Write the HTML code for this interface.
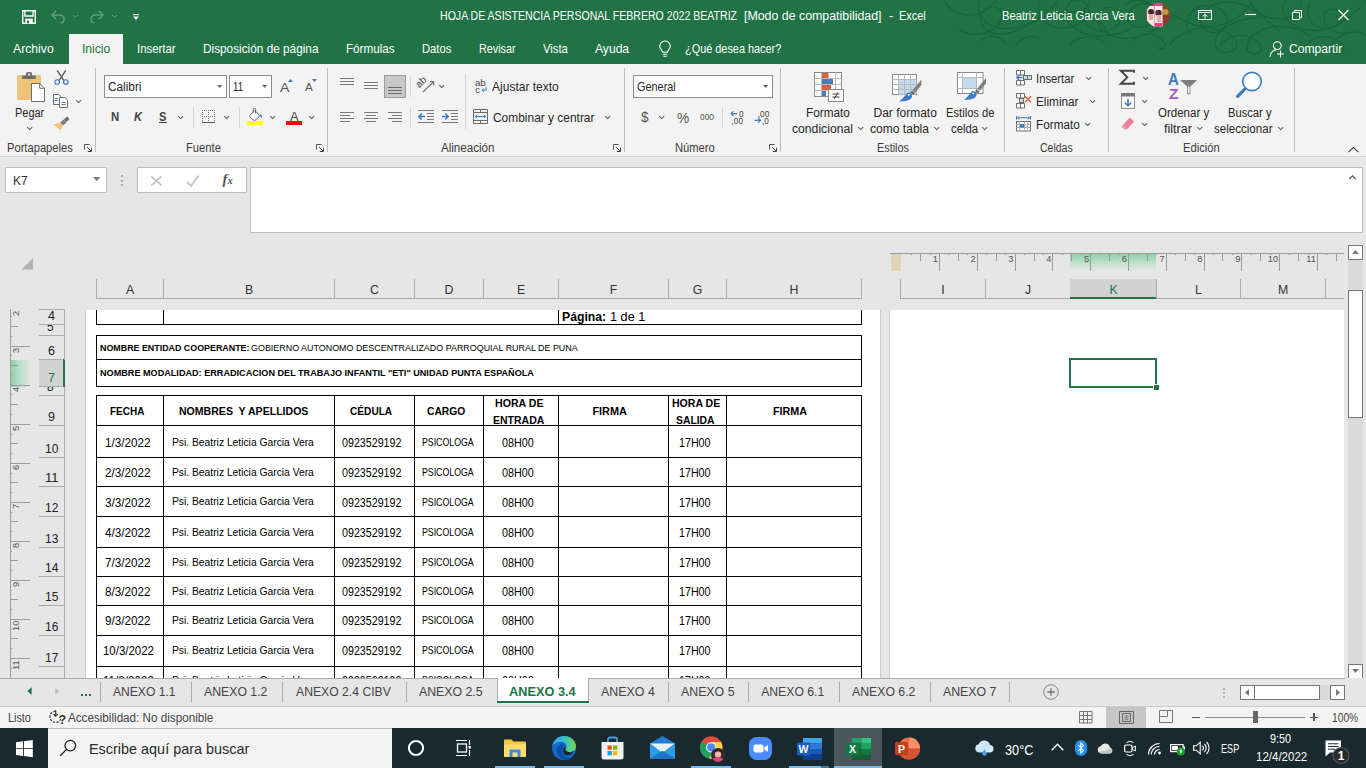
<!DOCTYPE html>
<html lang="es"><head><meta charset="utf-8"><title>HOJA DE ASISTENCIA PERSONAL FEBRERO 2022 BEATRIZ - Excel</title>
<style>
html,body{margin:0;padding:0;}
body{width:1366px;height:768px;overflow:hidden;position:relative;background:#e6e6e6;font-family:"Liberation Sans",sans-serif;}
#app{position:absolute;left:0;top:0;width:1366px;height:768px;overflow:hidden;}
#app div,#app svg,#app span.t{position:absolute;}
span.t{white-space:pre;transform-origin:0 50%;display:block;}
svg{overflow:visible;}
</style></head><body><div id="app">
<div style="left:0px;top:0px;width:1366px;height:64px;background:#217346;"></div>
<div style="left:0px;top:64px;width:1366px;height:92px;background:#f3f3f3;"></div>
<div style="left:0px;top:156px;width:1366px;height:1px;background:#d5d5d5;"></div>
<div style="left:0px;top:157px;width:1366px;height:521px;background:#e6e6e6;"></div>
<svg style="left:920px;top:0px;" width="446" height="48" viewBox="0 0 446 48">
<path stroke="#1a643a" stroke-width="1.3" fill="none" stroke-linecap="round" opacity="0.9" d="M25 2c8 14 30 18 44 6s8-22-4-14s-8 30 14 34s44-10 58-26"/>
<path stroke="#1a643a" stroke-width="1.3" fill="none" stroke-linecap="round" opacity="0.9" d="M120 0c-6 16 8 30 26 28s30-18 18-26s-26 8-14 22s40 16 62 4"/>
<path stroke="#1a643a" stroke-width="1.3" fill="none" stroke-linecap="round" opacity="0.9" d="M205 6c10-10 28-6 30 6s-14 20-24 12s2-22 18-20s30 18 50 22s40-6 52-22"/>
<path stroke="#1a643a" stroke-width="1.3" fill="none" stroke-linecap="round" opacity="0.9" d="M250 44c12-14 32-20 50-14s22 18 10 22s-22-10-8-22s40-16 64-10"/>
<path stroke="#1a643a" stroke-width="1.3" fill="none" stroke-linecap="round" opacity="0.9" d="M330 0c4 14 20 22 36 18s20-18 8-20s-16 16-2 26s36 8 50-2s22-18 24-22"/>
<path stroke="#1a643a" stroke-width="1.3" fill="none" stroke-linecap="round" opacity="0.9" d="M385 46c8-10 22-12 32-6s8 14 0 14s-8-12 4-18s22-4 25 0"/>
<path stroke="#1a643a" stroke-width="1.3" fill="none" stroke-linecap="round" opacity="0.9" d="M60 40c10-6 22-4 26 4M150 44c8-8 24-10 34-2"/>
<path stroke="#1a643a" stroke-width="1.3" fill="none" stroke-linecap="round" opacity="0.9" d="M40 30c14 8 34 4 40-8s-6-20-16-12s0 26 20 24s36-20 60-22s40 10 44 22"/>
<path stroke="#1a643a" stroke-width="1.3" fill="none" stroke-linecap="round" opacity="0.9" d="M170 2c-10 10-8 24 6 28s28-6 24-16s-20-8-22 4s14 22 34 20s30-14 44-26"/>
<path stroke="#1a643a" stroke-width="1.3" fill="none" stroke-linecap="round" opacity="0.9" d="M270 34c-8-12 0-26 14-28s26 8 22 18s-18 12-24 2s6-24 26-24s34 14 50 28"/>
<path stroke="#1a643a" stroke-width="1.3" fill="none" stroke-linecap="round" opacity="0.9" d="M300 46c6-10 20-14 32-8s12 16 2 16s-10-14 4-22s34-8 52 4"/>
<path stroke="#1a643a" stroke-width="1.3" fill="none" stroke-linecap="round" opacity="0.9" d="M390 4c-6 10 0 22 12 24s22-6 18-14s-16-6-16 4s12 18 26 14"/>
<path stroke="#1a643a" stroke-width="1.3" fill="none" stroke-linecap="round" opacity="0.9" d="M96 46c4-8 14-12 22-8M214 40c6-6 18-8 26-2s6 12-2 10"/>
</svg>
<svg style="left:22px;top:10px;" width="14" height="14" viewBox="0 0 14 14"><path d="M0.7 0.7h12.6v12.6h-12.6z" fill="none" stroke="#ffffff" stroke-width="1.4"/><path d="M2.900 0.700v5.300h8.200v-5.300" fill="none" stroke="#ffffff" stroke-width="1.300"/><rect x="3.2" y="8.6" width="7.6" height="4.7" fill="#ffffff"/><rect x="5" y="10.6" width="2" height="2.7" fill="#217346"/></svg>
<svg style="left:51px;top:10px;" width="14" height="13" viewBox="0 0 14 13"><path d="M5.2 0.8L1 5l4.2 4.2M1 5h7.2c3 0 5 2 5 4.3c0 2-1.6 3.4-3.6 3.4" fill="none" stroke="#5f9f7b" stroke-width="1.5"/></svg>
<svg style="left:73px;top:14.5px;" width="5" height="3" viewBox="0 0 5 3"><path d="M0 0l2.5 2.5L5 0" fill="none" stroke="#5f9f7b" stroke-width="1"/></svg>
<svg style="left:90px;top:10px;" width="14" height="13" viewBox="0 0 14 13"><path d="M8.8 0.8L13 5l-4.2 4.2M13 5H5.8c-3 0-5 2-5 4.3c0 2 1.6 3.4 3.6 3.4" fill="none" stroke="#5f9f7b" stroke-width="1.5"/></svg>
<svg style="left:112px;top:14.5px;" width="5" height="3" viewBox="0 0 5 3"><path d="M0 0l2.5 2.5L5 0" fill="none" stroke="#5f9f7b" stroke-width="1"/></svg>
<svg style="left:132.5px;top:14px;" width="6" height="6" viewBox="0 0 6 6"><rect x="0" y="0" width="6" height="1.2" fill="#ffffff"/><path d="M0 2.6h6l-3 3.4z" fill="#ffffff"/></svg>
<span class="t" style="font-size:12.5px;line-height:12.5px;top:9.92px;color:#ffffff;left:439.50px;transform:scaleX(0.8450);">HOJA DE ASISTENCIA PERSONAL FEBRERO 2022 BEATRIZ</span>
<span class="t" style="font-size:12.5px;line-height:12.5px;top:9.92px;color:#ffffff;left:743.50px;transform:scaleX(0.9893);">[Modo de compatibilidad]</span>
<span class="t" style="font-size:12.5px;line-height:12.5px;top:9.92px;color:#ffffff;left:888.60px;transform:scaleX(1.0067);">-</span>
<span class="t" style="font-size:12.5px;line-height:12.5px;top:9.92px;color:#ffffff;left:899.00px;transform:scaleX(0.8699);">Excel</span>
<span class="t" style="font-size:12.5px;line-height:12.5px;top:9.92px;color:#ffffff;left:1002.00px;transform:scaleX(0.8966);">Beatriz Leticia Garcia Vera</span>
<svg style="left:1146px;top:3px;" width="24" height="24" viewBox="0 0 24 24"><defs><clipPath id="av"><circle cx="12" cy="12" r="12"/></clipPath></defs>
<g clip-path="url(#av)"><rect width="24" height="24" fill="#c8346e"/><rect x="1" y="3" width="7" height="21" fill="#f3e9ea"/><rect x="8.5" y="2" width="8" height="22" fill="#f6eef0"/><rect x="17" y="0" width="7" height="24" fill="#7a4a22"/>
<circle cx="5" cy="9" r="3" fill="#3a2a2a"/><circle cx="12.5" cy="10" r="3.2" fill="#4a3030"/><rect x="3" y="11" width="4" height="6" fill="#d9a7a0"/><rect x="10.5" y="12" width="4.5" height="7" fill="#e0b1a8"/><circle cx="19.5" cy="9" r="3" fill="#c9973f"/><rect x="17" y="13" width="6" height="9" fill="#8c3a2a"/><rect x="8" y="0" width="9" height="3" fill="#e0457f"/><rect x="9" y="20" width="7" height="4" fill="#e0457f"/></g></svg>
<svg style="left:1198px;top:10px;" width="14" height="10" viewBox="0 0 14 10"><rect x="0.5" y="0.5" width="13" height="9" fill="none" stroke="#ffffff" stroke-width="1"/><path d="M0.500 2.500h13" stroke="#ffffff" stroke-width="1"/><path d="M7 8.500V4.400M4.800 6.400L7 4.200l2.200 2.200" fill="none" stroke="#ffffff" stroke-width="1"/></svg>
<div style="left:1245px;top:14px;width:11px;height:1px;background:#ffffff;"></div>
<svg style="left:1292px;top:10px;" width="10" height="10" viewBox="0 0 10 10"><path d="M0.5 2.5h7v7h-7z" fill="none" stroke="#ffffff" stroke-width="1"/><path d="M2.5 2.5v-2h7v7h-2" fill="none" stroke="#ffffff" stroke-width="1"/></svg>
<svg style="left:1338px;top:10px;" width="11" height="10" viewBox="0 0 11 10"><path d="M0.5 0L10.5 10M10.5 0L0.5 10" fill="none" stroke="#ffffff" stroke-width="1.1"/></svg>
<div style="left:69px;top:34px;width:54px;height:30px;background:#f3f3f3;"></div>
<span class="t" style="font-size:12.6px;line-height:12.6px;top:42.63px;color:#ffffff;left:13.10px;transform:scaleX(0.9690);">Archivo</span>
<span class="t" style="font-size:12.6px;line-height:12.6px;top:42.63px;color:#ffffff;left:137.40px;transform:scaleX(0.9039);">Insertar</span>
<span class="t" style="font-size:12.6px;line-height:12.6px;top:42.63px;color:#ffffff;left:203.30px;transform:scaleX(0.9372);">Disposición de página</span>
<span class="t" style="font-size:12.6px;line-height:12.6px;top:42.63px;color:#ffffff;left:346.20px;transform:scaleX(0.9260);">Fórmulas</span>
<span class="t" style="font-size:12.6px;line-height:12.6px;top:42.63px;color:#ffffff;left:422.40px;transform:scaleX(0.8904);">Datos</span>
<span class="t" style="font-size:12.6px;line-height:12.6px;top:42.63px;color:#ffffff;left:479.40px;transform:scaleX(0.8571);">Revisar</span>
<span class="t" style="font-size:12.6px;line-height:12.6px;top:42.63px;color:#ffffff;left:542.80px;transform:scaleX(0.8963);">Vista</span>
<span class="t" style="font-size:12.6px;line-height:12.6px;top:42.63px;color:#ffffff;left:594.60px;transform:scaleX(0.9610);">Ayuda</span>
<span class="t" style="font-size:12.6px;line-height:12.6px;top:42.63px;color:#ffffff;left:684.50px;transform:scaleX(0.8650);">¿Qué desea hacer?</span>
<span class="t" style="font-size:12.6px;line-height:12.6px;top:42.63px;color:#ffffff;left:1288.50px;transform:scaleX(0.9621);">Compartir</span>
<span class="t" style="font-size:12.6px;line-height:12.6px;top:42.63px;color:#217346;left:81.50px;transform:scaleX(0.9624);">Inicio</span>
<svg style="left:659px;top:41px;" width="12" height="16" viewBox="0 0 12 16"><path d="M3.6 11.2c0-1.6-2.9-2.9-2.9-5.9a5.3 5.3 0 0 1 10.6 0c0 3-2.9 4.3-2.9 5.9z" fill="none" stroke="#ffffff" stroke-width="1.1"/><path d="M3.8 13.2h4.4M4.4 15.2h3.2" stroke="#ffffff" stroke-width="1.1"/></svg>
<svg style="left:1268.5px;top:40.5px;" width="16" height="17" viewBox="0 0 16 17"><circle cx="8.3" cy="4.6" r="3.9" fill="none" stroke="#ffffff" stroke-width="1.1"/><path d="M0.8 16c0.6-4.2 3-6.8 6.6-7.3" fill="none" stroke="#ffffff" stroke-width="1.1"/><path d="M11.5 9.5v7M8 13h7" stroke="#ffffff" stroke-width="1.1"/></svg>
<div style="left:95px;top:68px;width:1px;height:84px;background:#bdbdbd;"></div>
<div style="left:327px;top:68px;width:1px;height:84px;background:#bdbdbd;"></div>
<div style="left:624px;top:68px;width:1px;height:84px;background:#bdbdbd;"></div>
<div style="left:780px;top:68px;width:1px;height:84px;background:#bdbdbd;"></div>
<div style="left:1004px;top:68px;width:1px;height:84px;background:#bdbdbd;"></div>
<div style="left:1108px;top:68px;width:1px;height:84px;background:#bdbdbd;"></div>
<div style="left:1294px;top:68px;width:1px;height:84px;background:#bdbdbd;"></div>
<svg style="left:16px;top:71px;" width="30" height="32" viewBox="0 0 30 32">
<rect x="1" y="4" width="24" height="25" rx="1.5" fill="#eec47c"/>
<path d="M6.300 8v-3.400h3.600v-1.600a2 2 0 0 1 2-2h2.200a2 2 0 0 1 2 2v1.600h3.600v3.400z" fill="#6d6d6d"/><circle cx="13" cy="3.600" r="1.100" fill="#f3f3f3"/>
<path d="M15.5 12.5h8.2l4.8 4.8v13.2h-13z" fill="#fff" stroke="#6d6d6d" stroke-width="1"/><path d="M23.7 12.5v4.8h4.8" fill="none" stroke="#6d6d6d" stroke-width="1"/></svg>
<span class="t" style="font-size:12px;line-height:12px;top:106.84px;color:#262626;left:14.80px;transform:scaleX(0.9116);">Pegar</span>
<svg style="left:26.6px;top:126.8px;" width="5.4" height="3" viewBox="0 0 5.4 3"><path d="M0.2 0.2l2.5 2.4l2.5-2.4" fill="none" stroke="#5a5a5a" stroke-width="1.05"/></svg>
<svg style="left:53.5px;top:70px;" width="15" height="15" viewBox="0 0 15 15"><path d="M3.2 0.3l6.6 10M11.8 0.3l-6.6 10" stroke="#5f5f5f" stroke-width="1.5" fill="none"/>
<circle cx="3.2" cy="12" r="2.3" fill="none" stroke="#3e7bc4" stroke-width="1.1"/><circle cx="11.8" cy="12" r="2.3" fill="none" stroke="#3e7bc4" stroke-width="1.1"/></svg>
<svg style="left:53px;top:94px;" width="16" height="14" viewBox="0 0 16 14"><path d="M0.5 0.5h5.3l2.7 2.7v7.3h-8z" fill="#fff" stroke="#6a6a6a"/><path d="M6.5 3.5h5.3l2.7 2.7v7.3h-8z" fill="#fff" stroke="#6a6a6a"/>
<path d="M2 4.5h3M2 6.5h3M8.5 8.5h4M8.5 10.5h4" stroke="#3e7bc4" stroke-width="1"/></svg>
<svg style="left:76.4px;top:100px;" width="5.4" height="3" viewBox="0 0 5.4 3"><path d="M0.2 0.2l2.5 2.4l2.5-2.4" fill="none" stroke="#5a5a5a" stroke-width="1.05"/></svg>
<svg style="left:53px;top:116px;" width="17" height="15" viewBox="0 0 17 15"><path d="M11 3.2l3.2-2.6l2.2 2.6l-3.2 2.8z" fill="#6d6d6d"/><path d="M7.2 6.4l3.6-3l2.6 3l-3.6 3z" fill="#7b7b7b"/><path d="M0.5 8.5l6.3-2l3.2 3.6l-2.6 4.4z" fill="#eec47c"/></svg>
<span class="t" style="font-size:12px;line-height:12px;top:142.34px;color:#3b3b3b;left:6.50px;transform:scaleX(0.9304);">Portapapeles</span>
<svg style="left:84px;top:144px;" width="8" height="8" viewBox="0 0 8 8"><path d="M0.5 5.5v-5h5" fill="none" stroke="#555" stroke-width="1"/><path d="M3 3l4 4M7.5 3.8v3.7h-3.7" fill="none" stroke="#444" stroke-width="1"/></svg>
<div style="left:104px;top:75px;width:121px;height:21px;background:#fff;border:1px solid #8c8c8c;"></div>
<span class="t" style="font-size:12px;line-height:12px;top:80.94px;color:#262626;left:107.50px;transform:scaleX(0.9848);">Calibri</span>
<svg style="left:216.8px;top:85.2px;" width="5.4" height="3" viewBox="0 0 5.4 3"><path d="M0 0h5.4l-2.7 3z" fill="#666"/></svg>
<div style="left:229px;top:75px;width:41px;height:21px;background:#fff;border:1px solid #8c8c8c;"></div>
<span class="t" style="font-size:12px;line-height:12px;top:80.94px;color:#262626;left:232.90px;transform:scaleX(0.8020);">11</span>
<svg style="left:261.8px;top:85.2px;" width="5.4" height="3" viewBox="0 0 5.4 3"><path d="M0 0h5.4l-2.7 3z" fill="#666"/></svg>
<span class="t" style="font-size:13px;line-height:13px;top:80.80px;color:#555;left:280.20px;transform:scaleX(1.0840);">A</span>
<svg style="left:288px;top:79px;" width="5" height="3" viewBox="0 0 5 3"><path d="M0 3h5l-2.5-3z" fill="#3e7bc4"/></svg>
<span class="t" style="font-size:10.2px;line-height:10.2px;top:83.17px;color:#555;left:305.00px;transform:scaleX(1.1476);">A</span>
<svg style="left:311.8px;top:79px;" width="5" height="3" viewBox="0 0 5 3"><path d="M0 0h5l-2.5 3z" fill="#3e7bc4"/></svg>
<span class="t" style="font-size:12px;line-height:12px;top:110.94px;color:#444;font-weight:bold;left:110.60px;transform:scaleX(0.9456);">N</span>
<span class="t" style="font-size:12px;line-height:12px;top:110.94px;color:#444;font-weight:bold;font-style:italic;left:134.00px;transform:scaleX(0.9225);">K</span>
<span class="t" style="font-size:12px;line-height:12px;top:110.94px;color:#444;font-weight:bold;left:159.30px;transform:scaleX(0.9232);">S</span>
<div style="left:159px;top:122px;width:8px;height:1px;background:#444;"></div>
<svg style="left:178.4px;top:115.8px;" width="5.4" height="3" viewBox="0 0 5.4 3"><path d="M0.2 0.2l2.5 2.4l2.5-2.4" fill="none" stroke="#5a5a5a" stroke-width="1.05"/></svg>
<div style="left:193px;top:107px;width:1px;height:21px;background:#d6d6d6;"></div>
<svg style="left:202px;top:110px;" width="13" height="13" viewBox="0 0 13 13"><g stroke="#7a7a7a" stroke-width="1" stroke-dasharray="1 1"><path d="M0 0.5h13M0 6.5h13M0.5 0v12M6.5 0v12M12.5 0v12"/></g><path d="M0 12.5h13" stroke="#555" stroke-width="1"/></svg>
<svg style="left:224.3px;top:115.8px;" width="5.4" height="3" viewBox="0 0 5.4 3"><path d="M0.2 0.2l2.5 2.4l2.5-2.4" fill="none" stroke="#5a5a5a" stroke-width="1.05"/></svg>
<div style="left:239px;top:107px;width:1px;height:21px;background:#d6d6d6;"></div>
<svg style="left:247px;top:108px;" width="17" height="17" viewBox="0 0 17 17"><path d="M2.2 8.2l5.6-5.6l5.2 5.2l-5.6 5.2z" fill="#fff" stroke="#666" stroke-width="1"/><path d="M6.2 4.6v-3.2q0-0.9 0.9-0.9h0.6q0.9 0 0.9 0.9v4" fill="none" stroke="#666" stroke-width="1"/>
<path d="M13.2 6.2c1.6 0.8 2.4 2.4 1.9 4.6c-0.6-1.5-1.6-2.5-2.9-3z" fill="#3e7bc4"/><rect x="0" y="13" width="16" height="4" fill="#ffff00"/></svg>
<svg style="left:270.2px;top:115.8px;" width="5.4" height="3" viewBox="0 0 5.4 3"><path d="M0.2 0.2l2.5 2.4l2.5-2.4" fill="none" stroke="#5a5a5a" stroke-width="1.05"/></svg>
<span class="t" style="font-size:13.6px;line-height:13.6px;top:109.59px;color:#444;left:289.80px;transform:scaleX(0.9473);">A</span>
<div style="left:286px;top:121px;width:16px;height:4px;background:#ff0000;"></div>
<svg style="left:309.3px;top:115.8px;" width="5.4" height="3" viewBox="0 0 5.4 3"><path d="M0.2 0.2l2.5 2.4l2.5-2.4" fill="none" stroke="#5a5a5a" stroke-width="1.05"/></svg>
<span class="t" style="font-size:12px;line-height:12px;top:142.34px;color:#3b3b3b;left:185.60px;transform:scaleX(0.9368);">Fuente</span>
<svg style="left:316px;top:144px;" width="8" height="8" viewBox="0 0 8 8"><path d="M0.5 5.5v-5h5" fill="none" stroke="#555" stroke-width="1"/><path d="M3 3l4 4M7.5 3.8v3.7h-3.7" fill="none" stroke="#444" stroke-width="1"/></svg>
<div style="left:340px;top:78px;width:14px;height:1px;background:#777;"></div>
<div style="left:340px;top:81px;width:14px;height:1px;background:#777;"></div>
<div style="left:340px;top:84px;width:14px;height:1px;background:#777;"></div>
<div style="left:364px;top:82px;width:14px;height:1px;background:#777;"></div>
<div style="left:364px;top:85px;width:14px;height:1px;background:#777;"></div>
<div style="left:364px;top:88px;width:14px;height:1px;background:#777;"></div>
<div style="left:384px;top:75px;width:20px;height:21px;background:#c8c8c8;border:1px solid #9a9a9a;"></div>
<div style="left:388px;top:87px;width:14px;height:1px;background:#6a6a6a;"></div>
<div style="left:388px;top:90px;width:14px;height:1px;background:#6a6a6a;"></div>
<div style="left:388px;top:93px;width:14px;height:1px;background:#6a6a6a;"></div>
<div style="left:410px;top:76px;width:1px;height:21px;background:#d6d6d6;"></div>
<svg style="left:418px;top:78px;" width="17" height="15" viewBox="0 0 17 15"><path d="M5 14.2L15.2 4.2M12 3.6l3.6 0.2l0.2 3.6" fill="none" stroke="#666" stroke-width="1.1"/>
<text x="0" y="0" font-size="10" fill="#444" transform="translate(1.2 10.2) rotate(-45)" font-family="Liberation Sans, sans-serif">ab</text></svg>
<svg style="left:439.3px;top:84.5px;" width="5.4" height="3" viewBox="0 0 5.4 3"><path d="M0.2 0.2l2.5 2.4l2.5-2.4" fill="none" stroke="#5a5a5a" stroke-width="1.05"/></svg>
<div style="left:465px;top:74px;width:1px;height:55px;background:#d6d6d6;"></div>
<div style="left:340px;top:112px;width:14px;height:1px;background:#777;"></div>
<div style="left:364px;top:112px;width:14px;height:1px;background:#777;"></div>
<div style="left:388px;top:112px;width:14px;height:1px;background:#777;"></div>
<div style="left:340px;top:115px;width:10px;height:1px;background:#777;"></div>
<div style="left:366px;top:115px;width:10px;height:1px;background:#777;"></div>
<div style="left:392px;top:115px;width:10px;height:1px;background:#777;"></div>
<div style="left:340px;top:118px;width:14px;height:1px;background:#777;"></div>
<div style="left:364px;top:118px;width:14px;height:1px;background:#777;"></div>
<div style="left:388px;top:118px;width:14px;height:1px;background:#777;"></div>
<div style="left:340px;top:121px;width:10px;height:1px;background:#777;"></div>
<div style="left:366px;top:121px;width:10px;height:1px;background:#777;"></div>
<div style="left:392px;top:121px;width:10px;height:1px;background:#777;"></div>
<div style="left:410px;top:107px;width:1px;height:21px;background:#d6d6d6;"></div>
<svg style="left:418px;top:110px;" width="16" height="13" viewBox="0 0 16 13"><path d="M0 0.5h16M9 3.5h7M9 6.5h7M9 9.5h7M0 12.5h16" stroke="#777" stroke-width="1"/><path d="M7 6.5H0.8M3.8 3.5L0.8 6.5l3 3" fill="none" stroke="#3e7bc4" stroke-width="1.5"/></svg>
<svg style="left:442px;top:110px;" width="16" height="13" viewBox="0 0 16 13"><path d="M0 0.5h16M9 3.5h7M9 6.5h7M9 9.5h7M0 12.5h16" stroke="#777" stroke-width="1"/><path d="M0 6.5h6.2M3.2 3.5l3 3l-3 3" fill="none" stroke="#3e7bc4" stroke-width="1.5"/></svg>
<svg style="left:474.5px;top:79px;" width="13" height="15" viewBox="0 0 13 15"><text x="0" y="6.8" font-size="9.6" fill="#444" font-family="Liberation Sans, sans-serif">ab</text><text x="0.3" y="13.6" font-size="9.6" fill="#444" font-family="Liberation Sans, sans-serif">c</text>
<path d="M11.2 8v3.2h-4M8.8 9.4l-1.8 1.8l1.8 1.8" fill="none" stroke="#3e7bc4" stroke-width="1"/></svg>
<span class="t" style="font-size:12px;line-height:12px;top:80.94px;color:#262626;left:492.10px;">Ajustar texto</span>
<svg style="left:473px;top:109px;" width="15" height="15" viewBox="0 0 15 15"><path d="M0.5 0.5h14v14h-14zM0.5 3.5h14M0.5 11.5h14M7.5 0.5v3M7.5 11.5v3" fill="none" stroke="#6d6d6d" stroke-width="1"/>
<path d="M2.2 7.5h10.6M4.2 5.7l-2 1.8l2 1.8M10.8 5.7l2 1.8l-2 1.8" fill="none" stroke="#3e7bc4" stroke-width="1"/></svg>
<span class="t" style="font-size:12px;line-height:12px;top:112.14px;color:#262626;left:492.50px;transform:scaleX(0.9946);">Combinar y centrar</span>
<svg style="left:605.3px;top:115.8px;" width="5.4" height="3" viewBox="0 0 5.4 3"><path d="M0.2 0.2l2.5 2.4l2.5-2.4" fill="none" stroke="#5a5a5a" stroke-width="1.05"/></svg>
<span class="t" style="font-size:12px;line-height:12px;top:142.34px;color:#3b3b3b;left:441.00px;transform:scaleX(0.9643);">Alineación</span>
<svg style="left:613px;top:144px;" width="8" height="8" viewBox="0 0 8 8"><path d="M0.5 5.5v-5h5" fill="none" stroke="#555" stroke-width="1"/><path d="M3 3l4 4M7.5 3.8v3.7h-3.7" fill="none" stroke="#444" stroke-width="1"/></svg>
<div style="left:633px;top:75px;width:138px;height:21px;background:#fff;border:1px solid #8c8c8c;"></div>
<span class="t" style="font-size:12px;line-height:12px;top:80.94px;color:#262626;left:636.60px;transform:scaleX(0.9086);">General</span>
<svg style="left:762.5px;top:85.2px;" width="5.4" height="3" viewBox="0 0 5.4 3"><path d="M0 0h5.4l-2.7 3z" fill="#666"/></svg>
<span class="t" style="font-size:15px;line-height:15px;top:109.20px;color:#555;left:640.60px;transform:scaleX(0.9109);">$</span>
<svg style="left:659px;top:115.8px;" width="5.4" height="3" viewBox="0 0 5.4 3"><path d="M0.2 0.2l2.5 2.4l2.5-2.4" fill="none" stroke="#5a5a5a" stroke-width="1.05"/></svg>
<span class="t" style="font-size:14px;line-height:14px;top:111.05px;color:#555;left:677.20px;transform:scaleX(0.9797);">%</span>
<span class="t" style="font-size:9px;line-height:9px;top:112.68px;color:#555;left:700.00px;transform:scaleX(0.9314);">000</span>
<div style="left:722px;top:107px;width:1px;height:21px;background:#d6d6d6;"></div>
<svg style="left:730px;top:110px;" width="15" height="14" viewBox="0 0 15 14"><path d="M7 3.6H1M3.4 1.2L1 3.6l2.4 2.4" fill="none" stroke="#3e7bc4" stroke-width="1.1"/>
<text x="9" y="6.6" font-size="8.2" font-family="Liberation Sans, sans-serif" fill="#444">0</text><text x="1.6" y="13.6" font-size="8.2" font-family="Liberation Sans, sans-serif" fill="#444">,00</text></svg>
<svg style="left:753.5px;top:110px;" width="15" height="14" viewBox="0 0 15 14"><text x="3.8" y="6.6" font-size="8.2" font-family="Liberation Sans, sans-serif" fill="#444">,00</text><path d="M0.5 10.4h6M4.1 8L6.5 10.4l-2.4 2.4" fill="none" stroke="#3e7bc4" stroke-width="1.1"/>
<text x="8" y="13.6" font-size="8.2" font-family="Liberation Sans, sans-serif" fill="#444">,0</text></svg>
<span class="t" style="font-size:12px;line-height:12px;top:142.34px;color:#3b3b3b;left:674.60px;transform:scaleX(0.9324);">Número</span>
<svg style="left:769px;top:144px;" width="8" height="8" viewBox="0 0 8 8"><path d="M0.5 5.5v-5h5" fill="none" stroke="#555" stroke-width="1"/><path d="M3 3l4 4M7.5 3.8v3.7h-3.7" fill="none" stroke="#444" stroke-width="1"/></svg>
<svg style="left:814px;top:72px;" width="31" height="30" viewBox="0 0 31 30"><rect x="0.5" y="0.5" width="27" height="24" fill="#fff" stroke="#8a8a8a"/>
<path d="M0.5 6.5h27M0.5 12.5h27M0.5 18.5h27M7.5 0.5v24M14.5 0.5v24M21.5 0.5v24" stroke="#b9b9b9" stroke-width="1"/>
<rect x="8" y="1" width="6" height="5" fill="#d9603b"/><rect x="8" y="7" width="11" height="5" fill="#4a7ebb"/><rect x="8" y="13" width="9" height="5" fill="#d9603b"/><rect x="8" y="19" width="4" height="5" fill="#4a7ebb"/>
<rect x="14.5" y="17.5" width="15" height="12" fill="#fff" stroke="#8a8a8a"/><path d="M18.5 22h7M18.5 25h7M24 20.2l-4 6.8" stroke="#444" stroke-width="1" fill="none"/></svg>
<span class="t" style="font-size:12px;line-height:12px;top:106.84px;color:#262626;left:805.60px;transform:scaleX(0.9801);">Formato</span>
<span class="t" style="font-size:12px;line-height:12px;top:122.84px;color:#262626;left:791.60px;transform:scaleX(1.0142);">condicional</span>
<svg style="left:857.6px;top:126.8px;" width="5.4" height="3" viewBox="0 0 5.4 3"><path d="M0.2 0.2l2.5 2.4l2.5-2.4" fill="none" stroke="#5a5a5a" stroke-width="1.05"/></svg>
<svg style="left:892px;top:74px;" width="30" height="28" viewBox="0 0 30 28"><rect x="0.5" y="0.5" width="24" height="20" fill="#fff" stroke="#8a8a8a"/>
<rect x="6.5" y="5.5" width="18" height="15" fill="#c5d9ef"/>
<path d="M0.5 5.5h24M0.5 10.5h24M0.5 15.5h24M6.5 0.5v20M12.5 0.5v20M18.5 0.5v20" stroke="#b9b9b9" stroke-width="1"/>
<path d="M29.4 5.6v5.4l-6.2 7.4l-2.6-2.2z" fill="#7f7f7f"/><path d="M20 16.6l2.8 2.4l-1.4 2l-2.8-2.4z" fill="#6a6a6a"/>
<path d="M7 27.4c3.5-2 5.4-5 7.4-7.6c1.6-2 4.6-1.4 5.4 0.6c0.9 2.4-0.5 4.6-3 5.6c-3 1.2-6.2 1.4-9.800 1.4z" fill="#3e7bc4"/><path d="M15.4 20.6c0.8-0.8 2.200-0.600 2.800 0.200l-1.6 1.400z" fill="#fff"/></svg>
<span class="t" style="font-size:12px;line-height:12px;top:106.84px;color:#262626;left:873.50px;">Dar formato</span>
<span class="t" style="font-size:12px;line-height:12px;top:122.84px;color:#262626;left:869.80px;transform:scaleX(1.0051);">como tabla</span>
<svg style="left:933.6px;top:126.8px;" width="5.4" height="3" viewBox="0 0 5.4 3"><path d="M0.2 0.2l2.5 2.4l2.5-2.4" fill="none" stroke="#5a5a5a" stroke-width="1.05"/></svg>
<svg style="left:957px;top:72px;" width="30" height="29" viewBox="0 0 30 29"><rect x="0.5" y="0.5" width="25.500" height="21" fill="#fff" stroke="#8a8a8a"/>
<path d="M0.5 5.5h25.500M0.5 16.5h25.500M5.5 0.500v21M19.500 0.500v21" stroke="#b9b9b9" stroke-width="1"/><rect x="6" y="6" width="13" height="10" fill="#c5d9ef"/>
<path d="M29 6v5.400l-6.200 7.400l-2.600-2.200z" fill="#7f7f7f"/><path d="M19.600 17l2.800 2.400l-1.400 2l-2.800-2.400z" fill="#6a6a6a"/>
<path d="M6.600 27.800c3.500-2 5.400-5 7.400-7.600c1.600-2 4.600-1.400 5.400 0.600c0.900 2.400-0.500 4.600-3 5.600c-3 1.200-6.200 1.400-9.800 1.400z" fill="#3e7bc4"/><path d="M15 21c0.800-0.800 2.200-0.600 2.800 0.200l-1.600 1.400z" fill="#fff"/></svg>
<span class="t" style="font-size:12px;line-height:12px;top:106.84px;color:#262626;left:945.60px;transform:scaleX(0.9321);">Estilos de</span>
<span class="t" style="font-size:12px;line-height:12px;top:122.84px;color:#262626;left:950.60px;transform:scaleX(0.9481);">celda</span>
<svg style="left:982.4px;top:126.8px;" width="5.4" height="3" viewBox="0 0 5.4 3"><path d="M0.2 0.2l2.5 2.4l2.5-2.4" fill="none" stroke="#5a5a5a" stroke-width="1.05"/></svg>
<span class="t" style="font-size:12px;line-height:12px;top:142.34px;color:#3b3b3b;left:876.60px;transform:scaleX(0.9026);">Estilos</span>
<svg style="left:1016px;top:70px;" width="16" height="16" viewBox="0 0 16 16"><path d="M0.500 0.500h8v4.500h-8zM4.500 0.500v4.500M0.500 10.500h8v4.500h-8zM4.500 10.500v4.500" fill="#fff" stroke="#6d6d6d"/>
<rect x="7.500" y="5.500" width="8" height="4" fill="#c5d9ef" stroke="#6d6d6d"/><path d="M11.500 5.500v4" stroke="#6d6d6d"/><path d="M6.500 7.500H0.800M3.200 5L0.800 7.500l2.400 2.500" fill="none" stroke="#3e7bc4" stroke-width="1.300"/></svg>
<span class="t" style="font-size:12px;line-height:12px;top:73.14px;color:#262626;left:1035.60px;transform:scaleX(0.9389);">Insertar</span>
<svg style="left:1085.5px;top:76.8px;" width="5.4" height="3" viewBox="0 0 5.4 3"><path d="M0.2 0.2l2.5 2.4l2.5-2.4" fill="none" stroke="#5a5a5a" stroke-width="1.05"/></svg>
<svg style="left:1016px;top:93px;" width="16" height="16" viewBox="0 0 16 16"><path d="M0.500 0.500h8v4.500h-8zM4.500 0.500v4.500M0.500 10.500h8v4.500h-8zM4.500 10.500v4.500" fill="#fff" stroke="#6d6d6d"/>
<rect x="3.500" y="5.500" width="4" height="4" fill="#c5d9ef" stroke="#6d6d6d"/><path d="M9 3.200l6 6M15 3.200l-6 6" fill="none" stroke="#d9603b" stroke-width="1.300"/></svg>
<span class="t" style="font-size:12px;line-height:12px;top:96.04px;color:#262626;left:1035.60px;transform:scaleX(0.9805);">Eliminar</span>
<svg style="left:1089.5px;top:100px;" width="5.4" height="3" viewBox="0 0 5.4 3"><path d="M0.2 0.2l2.5 2.4l2.5-2.4" fill="none" stroke="#5a5a5a" stroke-width="1.05"/></svg>
<svg style="left:1016px;top:116px;" width="15" height="16" viewBox="0 0 15 16"><path d="M0.500 0v3.500M14.500 0v3.500M1.500 1.800h12M3.300 0.300L1.500 1.800l1.800 1.500M11.700 0.300l1.800 1.500l-1.800 1.500" fill="none" stroke="#3e7bc4" stroke-width="1"/>
<rect x="0.500" y="5.500" width="14" height="9.500" fill="#fff" stroke="#6d6d6d"/><path d="M0.500 8.500h14M0.500 11.500h14M3.500 5.500v9.500M8.500 5.500v9.500M11.500 5.500v9.500" stroke="#b0b0b0"/><rect x="4" y="8" width="4" height="3.500" fill="#3e7bc4"/></svg>
<span class="t" style="font-size:12px;line-height:12px;top:119.14px;color:#262626;left:1035.60px;transform:scaleX(0.9801);">Formato</span>
<svg style="left:1084.6px;top:123px;" width="5.4" height="3" viewBox="0 0 5.4 3"><path d="M0.2 0.2l2.5 2.4l2.5-2.4" fill="none" stroke="#5a5a5a" stroke-width="1.05"/></svg>
<span class="t" style="font-size:12px;line-height:12px;top:142.34px;color:#3b3b3b;left:1039.80px;transform:scaleX(0.8753);">Celdas</span>
<svg style="left:1120px;top:70px;" width="15" height="15" viewBox="0 0 15 15"><path d="M14 2.800V0.800H0.800l6.600 6.500L0.800 13.800H14v-2" fill="none" stroke="#444" stroke-width="1.900"/></svg>
<svg style="left:1143.4px;top:76.8px;" width="5.4" height="3" viewBox="0 0 5.4 3"><path d="M0.2 0.2l2.5 2.4l2.5-2.4" fill="none" stroke="#5a5a5a" stroke-width="1.05"/></svg>
<svg style="left:1121px;top:93px;" width="14" height="16" viewBox="0 0 14 16"><rect x="0.500" y="0.500" width="13" height="15" fill="#fff" stroke="#8a8a8a"/><rect x="0" y="0" width="14" height="3.500" fill="#7a7a7a"/><path d="M7 5.500v7M3.800 9.500L7 12.700l3.200-3.200" fill="none" stroke="#3e7bc4" stroke-width="1.600"/></svg>
<svg style="left:1141.5px;top:100px;" width="5.4" height="3" viewBox="0 0 5.4 3"><path d="M0.2 0.2l2.5 2.4l2.5-2.4" fill="none" stroke="#5a5a5a" stroke-width="1.05"/></svg>
<svg style="left:1121px;top:117px;" width="14" height="13" viewBox="0 0 14 13"><path d="M8.800 0.600l4.400 4l-7 7.600l-4.400-4z" fill="#e8829a"/><path d="M1.200 8.800l4.400 4" stroke="#f3f3f3" stroke-width="1"/><path d="M0.600 9.500l3.800 3.400l1-1l-3.800-3.500z" fill="#e8829a"/></svg>
<svg style="left:1141.5px;top:123px;" width="5.4" height="3" viewBox="0 0 5.4 3"><path d="M0.2 0.2l2.5 2.4l2.5-2.4" fill="none" stroke="#5a5a5a" stroke-width="1.05"/></svg>
<span class="t" style="font-size:15.6px;line-height:15.6px;top:71.99px;color:#3e7bc4;font-weight:bold;left:1168.10px;transform:scaleX(0.9675);">A</span>
<span class="t" style="font-size:15.4px;line-height:15.4px;top:86.26px;color:#a05cc4;font-weight:bold;left:1169.00px;transform:scaleX(1.0100);">Z</span>
<svg style="left:1180px;top:80px;" width="18" height="15" viewBox="0 0 18 15"><path d="M0 0h17.200l-6.800 6.600v7.600h-3.400v-7.600z" fill="#7f7f7f"/><rect x="7.800" y="6.500" width="1.800" height="6.700" fill="#f3f3f3"/></svg>
<span class="t" style="font-size:12px;line-height:12px;top:106.84px;color:#262626;left:1157.50px;transform:scaleX(0.9595);">Ordenar y</span>
<span class="t" style="font-size:12px;line-height:12px;top:122.84px;color:#262626;left:1164.00px;transform:scaleX(1.0460);">filtrar</span>
<svg style="left:1196.8px;top:126.8px;" width="5.4" height="3" viewBox="0 0 5.4 3"><path d="M0.2 0.2l2.5 2.4l2.5-2.4" fill="none" stroke="#5a5a5a" stroke-width="1.05"/></svg>
<svg style="left:1236px;top:71px;" width="27" height="27" viewBox="0 0 27 27"><path d="M8.600 18.400l-7 7" stroke="#3e7bc4" stroke-width="3.200" stroke-linecap="round"/><circle cx="16" cy="10.500" r="9.200" fill="#fff" stroke="#3e7bc4" stroke-width="1.700"/></svg>
<span class="t" style="font-size:12px;line-height:12px;top:106.84px;color:#262626;left:1227.50px;transform:scaleX(0.9317);">Buscar y</span>
<span class="t" style="font-size:12px;line-height:12px;top:122.84px;color:#262626;left:1214.40px;transform:scaleX(0.9637);">seleccionar</span>
<svg style="left:1277.8px;top:126.8px;" width="5.4" height="3" viewBox="0 0 5.4 3"><path d="M0.2 0.2l2.5 2.4l2.5-2.4" fill="none" stroke="#5a5a5a" stroke-width="1.05"/></svg>
<span class="t" style="font-size:12px;line-height:12px;top:142.34px;color:#3b3b3b;left:1182.80px;transform:scaleX(0.9299);">Edición</span>
<svg style="left:1347.5px;top:147px;" width="11" height="6" viewBox="0 0 11 6"><path d="M0.400 5.200l5-4.600l5 4.600" fill="none" stroke="#444" stroke-width="1.100"/></svg>
<div style="left:5px;top:167px;width:100px;height:24px;background:#fff;border:1px solid #bdbdbd;"></div>
<span class="t" style="font-size:12.4px;line-height:12.4px;top:174.80px;color:#333;left:12.50px;transform:scaleX(0.9765);">K7</span>
<svg style="left:92.8px;top:177px;" width="7.4" height="4" viewBox="0 0 7.4 4"><path d="M0 0h7.400l-3.700 4z" fill="#777"/></svg>
<div style="left:121px;top:175px;width:2px;height:2px;background:#a9a9a9;"></div>
<div style="left:121px;top:179.5px;width:2px;height:2px;background:#a9a9a9;"></div>
<div style="left:121px;top:184px;width:2px;height:2px;background:#a9a9a9;"></div>
<div style="left:137px;top:167px;width:108px;height:24px;background:#fff;border:1px solid #bdbdbd;"></div>
<svg style="left:150.5px;top:175.5px;" width="11" height="9.5" viewBox="0 0 11 9.5"><path d="M0.300 0.300l10.400 9M10.700 0.300L0.300 9.300" stroke="#c3c3c3" stroke-width="1.700" fill="none"/></svg>
<svg style="left:186px;top:174.5px;" width="13" height="11.5" viewBox="0 0 13 11.5"><path d="M0.600 6.600l4.400 4.200L12.600 0.600" stroke="#c9c9c9" stroke-width="1.900" fill="none"/></svg>
<span class="t" style="font-size:14.5px;line-height:14.5px;top:172.23px;color:#555;font-weight:bold;font-style:italic;font-family:&quot;Liberation Serif&quot;,serif;left:222.60px;">f</span>
<span class="t" style="font-size:10.5px;line-height:10.5px;top:175.81px;color:#555;font-weight:bold;font-style:italic;font-family:&quot;Liberation Serif&quot;,serif;left:227.40px;">x</span>
<div style="left:250px;top:167px;width:1111px;height:64px;background:#fff;border:1px solid #bdbdbd;"></div>
<svg style="left:1349px;top:175px;" width="7" height="4.5" viewBox="0 0 7 4.5"><path d="M0.400 4l3.100-3.200l3.100 3.200" fill="none" stroke="#555" stroke-width="1.200"/></svg>
<svg style="left:21px;top:258px;" width="12" height="12" viewBox="0 0 12 12"><path d="M12 0v11.500H0.500z" fill="#b2b2b2"/></svg>
<div style="left:1070px;top:254px;width:86px;height:17px;background:linear-gradient(#8fd0ab,#b9dfc9 45%,#e6e6e6);"></div>
<div style="left:891px;top:254px;width:10px;height:17px;background:#e3d3b8;"></div>
<div style="left:890px;top:253px;width:454px;height:1px;background:#9c9c9c;"></div>
<div style="left:911px;top:253px;width:1px;height:2px;background:#9c9c9c;"></div>
<div style="left:920px;top:253px;width:1px;height:8px;background:#9c9c9c;"></div>
<div style="left:930px;top:253px;width:1px;height:2px;background:#9c9c9c;"></div>
<div style="left:939px;top:253px;width:1px;height:18px;background:#9c9c9c;"></div>
<span class="t" style="font-size:9.3px;line-height:9.3px;top:255.43px;color:#555;left:932.73px;">1</span>
<div style="left:948px;top:253px;width:1px;height:2px;background:#9c9c9c;"></div>
<div style="left:958px;top:253px;width:1px;height:8px;background:#9c9c9c;"></div>
<div style="left:967px;top:253px;width:1px;height:2px;background:#9c9c9c;"></div>
<div style="left:977px;top:253px;width:1px;height:18px;background:#9c9c9c;"></div>
<span class="t" style="font-size:9.3px;line-height:9.3px;top:255.43px;color:#555;left:970.53px;">2</span>
<div style="left:986px;top:253px;width:1px;height:2px;background:#9c9c9c;"></div>
<div style="left:996px;top:253px;width:1px;height:8px;background:#9c9c9c;"></div>
<div style="left:1005px;top:253px;width:1px;height:2px;background:#9c9c9c;"></div>
<div style="left:1015px;top:253px;width:1px;height:18px;background:#9c9c9c;"></div>
<span class="t" style="font-size:9.3px;line-height:9.3px;top:255.43px;color:#555;left:1008.33px;">3</span>
<div style="left:1024px;top:253px;width:1px;height:2px;background:#9c9c9c;"></div>
<div style="left:1034px;top:253px;width:1px;height:8px;background:#9c9c9c;"></div>
<div style="left:1043px;top:253px;width:1px;height:2px;background:#9c9c9c;"></div>
<div style="left:1052px;top:253px;width:1px;height:18px;background:#9c9c9c;"></div>
<span class="t" style="font-size:9.3px;line-height:9.3px;top:255.43px;color:#555;left:1046.13px;">4</span>
<div style="left:1062px;top:253px;width:1px;height:2px;background:#9c9c9c;"></div>
<div style="left:1071px;top:253px;width:1px;height:8px;background:#9c9c9c;"></div>
<div style="left:1081px;top:253px;width:1px;height:2px;background:#9c9c9c;"></div>
<div style="left:1090px;top:253px;width:1px;height:18px;background:#9c9c9c;"></div>
<span class="t" style="font-size:9.3px;line-height:9.3px;top:255.43px;color:#555;left:1083.93px;">5</span>
<div style="left:1100px;top:253px;width:1px;height:2px;background:#9c9c9c;"></div>
<div style="left:1109px;top:253px;width:1px;height:8px;background:#9c9c9c;"></div>
<div style="left:1119px;top:253px;width:1px;height:2px;background:#9c9c9c;"></div>
<div style="left:1128px;top:253px;width:1px;height:18px;background:#9c9c9c;"></div>
<span class="t" style="font-size:9.3px;line-height:9.3px;top:255.43px;color:#555;left:1121.73px;">6</span>
<div style="left:1137px;top:253px;width:1px;height:2px;background:#9c9c9c;"></div>
<div style="left:1147px;top:253px;width:1px;height:8px;background:#9c9c9c;"></div>
<div style="left:1156px;top:253px;width:1px;height:2px;background:#9c9c9c;"></div>
<div style="left:1166px;top:253px;width:1px;height:18px;background:#9c9c9c;"></div>
<span class="t" style="font-size:9.3px;line-height:9.3px;top:255.43px;color:#555;left:1159.53px;">7</span>
<div style="left:1175px;top:253px;width:1px;height:2px;background:#9c9c9c;"></div>
<div style="left:1185px;top:253px;width:1px;height:8px;background:#9c9c9c;"></div>
<div style="left:1194px;top:253px;width:1px;height:2px;background:#9c9c9c;"></div>
<div style="left:1204px;top:253px;width:1px;height:18px;background:#9c9c9c;"></div>
<span class="t" style="font-size:9.3px;line-height:9.3px;top:255.43px;color:#555;left:1197.33px;">8</span>
<div style="left:1213px;top:253px;width:1px;height:2px;background:#9c9c9c;"></div>
<div style="left:1222px;top:253px;width:1px;height:8px;background:#9c9c9c;"></div>
<div style="left:1232px;top:253px;width:1px;height:2px;background:#9c9c9c;"></div>
<div style="left:1241px;top:253px;width:1px;height:18px;background:#9c9c9c;"></div>
<span class="t" style="font-size:9.3px;line-height:9.3px;top:255.43px;color:#555;left:1235.13px;">9</span>
<div style="left:1251px;top:253px;width:1px;height:2px;background:#9c9c9c;"></div>
<div style="left:1260px;top:253px;width:1px;height:8px;background:#9c9c9c;"></div>
<div style="left:1270px;top:253px;width:1px;height:2px;background:#9c9c9c;"></div>
<div style="left:1279px;top:253px;width:1px;height:18px;background:#9c9c9c;"></div>
<span class="t" style="font-size:9.3px;line-height:9.3px;top:255.43px;color:#555;left:1267.76px;">10</span>
<div style="left:1289px;top:253px;width:1px;height:2px;background:#9c9c9c;"></div>
<div style="left:1298px;top:253px;width:1px;height:8px;background:#9c9c9c;"></div>
<div style="left:1308px;top:253px;width:1px;height:2px;background:#9c9c9c;"></div>
<div style="left:1317px;top:253px;width:1px;height:18px;background:#9c9c9c;"></div>
<span class="t" style="font-size:9.3px;line-height:9.3px;top:255.43px;color:#555;left:1306.24px;">11</span>
<div style="left:1326px;top:253px;width:1px;height:2px;background:#9c9c9c;"></div>
<div style="left:1336px;top:253px;width:1px;height:8px;background:#9c9c9c;"></div>
<div style="left:96px;top:298px;width:766px;height:1px;background:#ababab;"></div>
<div style="left:900px;top:298px;width:444px;height:1px;background:#ababab;"></div>
<div style="left:96px;top:279px;width:1px;height:20px;background:#ababab;"></div>
<div style="left:163px;top:279px;width:1px;height:20px;background:#ababab;"></div>
<div style="left:334px;top:279px;width:1px;height:20px;background:#ababab;"></div>
<div style="left:414px;top:279px;width:1px;height:20px;background:#ababab;"></div>
<div style="left:483px;top:279px;width:1px;height:20px;background:#ababab;"></div>
<div style="left:558px;top:279px;width:1px;height:20px;background:#ababab;"></div>
<div style="left:668px;top:279px;width:1px;height:20px;background:#ababab;"></div>
<div style="left:726px;top:279px;width:1px;height:20px;background:#ababab;"></div>
<div style="left:861px;top:279px;width:1px;height:20px;background:#ababab;"></div>
<div style="left:900px;top:279px;width:1px;height:20px;background:#ababab;"></div>
<div style="left:985px;top:279px;width:1px;height:20px;background:#ababab;"></div>
<div style="left:1070px;top:279px;width:1px;height:20px;background:#ababab;"></div>
<div style="left:1156px;top:279px;width:1px;height:20px;background:#ababab;"></div>
<div style="left:1240px;top:279px;width:1px;height:20px;background:#ababab;"></div>
<div style="left:1325px;top:279px;width:1px;height:20px;background:#ababab;"></div>
<div style="left:1070px;top:279px;width:86px;height:18px;background:#d2d2d2;"></div>
<div style="left:1070px;top:297px;width:86px;height:2px;background:#217346;"></div>
<span class="t" style="font-size:12.3px;line-height:12.3px;top:283.89px;color:#333;left:125.90px;">A</span>
<span class="t" style="font-size:12.3px;line-height:12.3px;top:283.89px;color:#333;left:244.90px;">B</span>
<span class="t" style="font-size:12.3px;line-height:12.3px;top:283.89px;color:#333;left:370.05px;">C</span>
<span class="t" style="font-size:12.3px;line-height:12.3px;top:283.89px;color:#333;left:444.55px;">D</span>
<span class="t" style="font-size:12.3px;line-height:12.3px;top:283.89px;color:#333;left:516.90px;">E</span>
<span class="t" style="font-size:12.3px;line-height:12.3px;top:283.89px;color:#333;left:609.74px;">F</span>
<span class="t" style="font-size:12.3px;line-height:12.3px;top:283.89px;color:#333;left:692.71px;">G</span>
<span class="t" style="font-size:12.3px;line-height:12.3px;top:283.89px;color:#333;left:789.55px;">H</span>
<span class="t" style="font-size:12.3px;line-height:12.3px;top:283.89px;color:#333;left:941.29px;">I</span>
<span class="t" style="font-size:12.3px;line-height:12.3px;top:283.89px;color:#333;left:1024.92px;">J</span>
<span class="t" style="font-size:12.3px;line-height:12.3px;top:283.89px;color:#217346;left:1109.40px;">K</span>
<span class="t" style="font-size:12.3px;line-height:12.3px;top:283.89px;color:#333;left:1195.08px;">L</span>
<span class="t" style="font-size:12.3px;line-height:12.3px;top:283.89px;color:#333;left:1277.88px;">M</span>
<div style="left:86px;top:310px;width:794px;height:368px;background:#fff;"></div>
<div style="left:85px;top:310px;width:1px;height:368px;background:#cfcfcf;"></div>
<div style="left:880px;top:310px;width:1px;height:368px;background:#cfcfcf;"></div>
<div style="left:890px;top:310px;width:454px;height:368px;background:#fff;"></div>
<div style="left:889px;top:310px;width:1px;height:368px;background:#cfcfcf;"></div>
<div style="left:11px;top:360px;width:20px;height:27px;background:linear-gradient(90deg,#8fd0ab,#b9dfc9 45%,#e6e6e6);"></div>
<div style="left:10px;top:309px;width:1px;height:369px;background:#9c9c9c;"></div>
<div style="left:10px;top:316px;width:2px;height:1px;background:#9c9c9c;"></div>
<div style="left:10px;top:326px;width:8px;height:1px;background:#9c9c9c;"></div>
<div style="left:10px;top:336px;width:2px;height:1px;background:#9c9c9c;"></div>
<span class="t" style="left:12px;top:315.5px;font-size:9.3px;line-height:8px;color:#555;transform:rotate(-90deg);transform-origin:0 0;">2</span>
<div style="left:10px;top:346px;width:20px;height:1px;background:#9c9c9c;"></div>
<div style="left:10px;top:355px;width:2px;height:1px;background:#9c9c9c;"></div>
<div style="left:10px;top:365px;width:8px;height:1px;background:#9c9c9c;"></div>
<div style="left:10px;top:375px;width:2px;height:1px;background:#9c9c9c;"></div>
<span class="t" style="left:12px;top:352.7px;font-size:9.3px;line-height:8px;color:#555;transform:rotate(-90deg);transform-origin:0 0;">3</span>
<div style="left:10px;top:385px;width:20px;height:1px;background:#9c9c9c;"></div>
<div style="left:10px;top:394px;width:2px;height:1px;background:#9c9c9c;"></div>
<div style="left:10px;top:404px;width:8px;height:1px;background:#9c9c9c;"></div>
<div style="left:10px;top:414px;width:2px;height:1px;background:#9c9c9c;"></div>
<span class="t" style="left:12px;top:391.7px;font-size:9.3px;line-height:8px;color:#555;transform:rotate(-90deg);transform-origin:0 0;">4</span>
<div style="left:10px;top:424px;width:20px;height:1px;background:#9c9c9c;"></div>
<div style="left:10px;top:434px;width:2px;height:1px;background:#9c9c9c;"></div>
<div style="left:10px;top:443px;width:8px;height:1px;background:#9c9c9c;"></div>
<div style="left:10px;top:453px;width:2px;height:1px;background:#9c9c9c;"></div>
<span class="t" style="left:12px;top:430.8px;font-size:9.3px;line-height:8px;color:#555;transform:rotate(-90deg);transform-origin:0 0;">5</span>
<div style="left:10px;top:463px;width:20px;height:1px;background:#9c9c9c;"></div>
<div style="left:10px;top:473px;width:2px;height:1px;background:#9c9c9c;"></div>
<div style="left:10px;top:482px;width:8px;height:1px;background:#9c9c9c;"></div>
<div style="left:10px;top:492px;width:2px;height:1px;background:#9c9c9c;"></div>
<span class="t" style="left:12px;top:469.8px;font-size:9.3px;line-height:8px;color:#555;transform:rotate(-90deg);transform-origin:0 0;">6</span>
<div style="left:10px;top:502px;width:20px;height:1px;background:#9c9c9c;"></div>
<div style="left:10px;top:512px;width:2px;height:1px;background:#9c9c9c;"></div>
<div style="left:10px;top:521px;width:8px;height:1px;background:#9c9c9c;"></div>
<div style="left:10px;top:531px;width:2px;height:1px;background:#9c9c9c;"></div>
<span class="t" style="left:12px;top:508.9px;font-size:9.3px;line-height:8px;color:#555;transform:rotate(-90deg);transform-origin:0 0;">7</span>
<div style="left:10px;top:541px;width:20px;height:1px;background:#9c9c9c;"></div>
<div style="left:10px;top:551px;width:2px;height:1px;background:#9c9c9c;"></div>
<div style="left:10px;top:560px;width:8px;height:1px;background:#9c9c9c;"></div>
<div style="left:10px;top:570px;width:2px;height:1px;background:#9c9c9c;"></div>
<span class="t" style="left:12px;top:547.9px;font-size:9.3px;line-height:8px;color:#555;transform:rotate(-90deg);transform-origin:0 0;">8</span>
<div style="left:10px;top:580px;width:20px;height:1px;background:#9c9c9c;"></div>
<div style="left:10px;top:590px;width:2px;height:1px;background:#9c9c9c;"></div>
<div style="left:10px;top:599px;width:8px;height:1px;background:#9c9c9c;"></div>
<div style="left:10px;top:609px;width:2px;height:1px;background:#9c9c9c;"></div>
<span class="t" style="left:12px;top:586.9px;font-size:9.3px;line-height:8px;color:#555;transform:rotate(-90deg);transform-origin:0 0;">9</span>
<div style="left:10px;top:619px;width:20px;height:1px;background:#9c9c9c;"></div>
<div style="left:10px;top:629px;width:2px;height:1px;background:#9c9c9c;"></div>
<div style="left:10px;top:638px;width:8px;height:1px;background:#9c9c9c;"></div>
<div style="left:10px;top:648px;width:2px;height:1px;background:#9c9c9c;"></div>
<span class="t" style="left:12px;top:630.5px;font-size:9.3px;line-height:8px;color:#555;transform:rotate(-90deg);transform-origin:0 0;">10</span>
<div style="left:10px;top:658px;width:20px;height:1px;background:#9c9c9c;"></div>
<div style="left:10px;top:668px;width:2px;height:1px;background:#9c9c9c;"></div>
<span class="t" style="left:12px;top:669.5px;font-size:9.3px;line-height:8px;color:#555;transform:rotate(-90deg);transform-origin:0 0;">11</span>
<div style="left:39px;top:360px;width:24px;height:26px;background:#d2d2d2;"></div>
<div style="left:63px;top:359px;width:2px;height:28px;background:#217346;"></div>
<div style="left:64px;top:309px;width:1px;height:51px;background:#ababab;"></div>
<div style="left:64px;top:387px;width:1px;height:292px;background:#ababab;"></div>
<div style="left:39px;top:309px;width:25px;height:1px;background:#ababab;"></div>
<div style="left:39px;top:324px;width:25px;height:1px;background:#ababab;"></div>
<div style="left:39px;top:335px;width:25px;height:1px;background:#ababab;"></div>
<div style="left:39px;top:359px;width:23px;height:1px;background:#ababab;"></div>
<div style="left:39px;top:386px;width:23px;height:1px;background:#ababab;"></div>
<div style="left:39px;top:395px;width:25px;height:1px;background:#ababab;"></div>
<div style="left:39px;top:425px;width:25px;height:1px;background:#ababab;"></div>
<div style="left:39px;top:457px;width:25px;height:1px;background:#ababab;"></div>
<div style="left:39px;top:486px;width:25px;height:1px;background:#ababab;"></div>
<div style="left:39px;top:516px;width:25px;height:1px;background:#ababab;"></div>
<div style="left:39px;top:547px;width:25px;height:1px;background:#ababab;"></div>
<div style="left:39px;top:576px;width:25px;height:1px;background:#ababab;"></div>
<div style="left:39px;top:605px;width:25px;height:1px;background:#ababab;"></div>
<div style="left:39px;top:635px;width:25px;height:1px;background:#ababab;"></div>
<div style="left:39px;top:666px;width:25px;height:1px;background:#ababab;"></div>
<span class="t" style="font-size:13px;line-height:13px;top:309.10px;color:#222;left:48.00px;transform:scaleX(0.9676);">4</span>
<div style="left:39px;top:325px;width:24px;height:10px;overflow:hidden;"><span class="t" style="left:8.400px;top:-4.80px;font-size:13px;line-height:13px;color:#222;transform:scaleX(0.92);">5</span></div>
<span class="t" style="font-size:13px;line-height:13px;top:344.10px;color:#222;left:48.00px;transform:scaleX(0.9676);">6</span>
<span class="t" style="font-size:13px;line-height:13px;top:371.10px;color:#217346;left:48.00px;transform:scaleX(0.9676);">7</span>
<div style="left:39px;top:387px;width:24px;height:8px;overflow:hidden;"><span class="t" style="left:8.400px;top:-6.80px;font-size:13px;line-height:13px;color:#222;transform:scaleX(0.92);">8</span></div>
<span class="t" style="font-size:13px;line-height:13px;top:410.10px;color:#222;left:48.00px;transform:scaleX(0.9676);">9</span>
<span class="t" style="font-size:13px;line-height:13px;top:442.10px;color:#222;left:44.80px;transform:scaleX(0.9261);">10</span>
<span class="t" style="font-size:13px;line-height:13px;top:471.10px;color:#222;left:44.80px;transform:scaleX(0.9926);">11</span>
<span class="t" style="font-size:13px;line-height:13px;top:501.10px;color:#222;left:44.80px;transform:scaleX(0.9261);">12</span>
<span class="t" style="font-size:13px;line-height:13px;top:532.10px;color:#222;left:44.80px;transform:scaleX(0.9261);">13</span>
<span class="t" style="font-size:13px;line-height:13px;top:561.10px;color:#222;left:44.80px;transform:scaleX(0.9261);">14</span>
<span class="t" style="font-size:13px;line-height:13px;top:590.10px;color:#222;left:44.80px;transform:scaleX(0.9261);">15</span>
<span class="t" style="font-size:13px;line-height:13px;top:620.10px;color:#222;left:44.80px;transform:scaleX(0.9261);">16</span>
<span class="t" style="font-size:13px;line-height:13px;top:651.10px;color:#222;left:44.80px;transform:scaleX(0.9261);">17</span>
<span class="t" style="font-size:13px;line-height:13px;top:682.10px;color:#222;left:44.80px;transform:scaleX(0.9261);">18</span>
<div style="left:1069px;top:358px;width:84px;height:26px;border:2px solid #217346;"></div>
<div style="left:1153px;top:384px;width:5px;height:5px;background:#217346;border:1px solid #fff;"></div>
<div style="left:1348px;top:260px;width:15px;height:405px;background:#dadada;"></div>
<div style="left:1348px;top:245px;width:13px;height:13px;background:#fff;border:1px solid #777;"></div>
<svg style="left:1352px;top:250px;" width="7" height="4" viewBox="0 0 7 4"><path d="M0 4h7l-3.500-4z" fill="#777"/></svg>
<div style="left:1348px;top:290px;width:13px;height:126px;background:#fff;border:1px solid #777;"></div>
<div style="left:1348px;top:664px;width:13px;height:13px;background:#fff;border:1px solid #777;"></div>
<svg style="left:1352px;top:669px;" width="7" height="4" viewBox="0 0 7 4"><path d="M0 0h7l-3.500 4z" fill="#777"/></svg>
<div style="left:96px;top:324px;width:766px;height:1px;background:#000;"></div>
<div style="left:96px;top:310px;width:1px;height:15px;background:#000;"></div>
<div style="left:163px;top:310px;width:1px;height:15px;background:#000;"></div>
<div style="left:558px;top:310px;width:1px;height:15px;background:#000;"></div>
<div style="left:861px;top:310px;width:1px;height:15px;background:#000;"></div>
<span class="t" style="font-size:12.6px;line-height:12.6px;top:311.03px;color:#000;font-weight:bold;left:561.90px;transform:scaleX(0.9692);">Página:</span>
<span class="t" style="font-size:12.6px;line-height:12.6px;top:311.03px;color:#000;left:609.70px;transform:scaleX(1.0081);">1 de 1</span>
<div style="left:96px;top:335px;width:765px;height:51px;border:1px solid #000;box-sizing:border-box;width:766px;height:52px;"></div>
<div style="left:96px;top:359px;width:766px;height:1px;background:#000;"></div>
<span class="t" style="font-size:9.8px;line-height:9.8px;top:342.80px;color:#000;font-weight:bold;left:99.70px;transform:scaleX(0.9065);">NOMBRE ENTIDAD COOPERANTE:</span>
<span class="t" style="font-size:9.8px;line-height:9.8px;top:342.80px;color:#000;left:251.20px;transform:scaleX(0.9107);">GOBIERNO AUTONOMO DESCENTRALIZADO PARROQUIAL RURAL DE PUNA</span>
<span class="t" style="font-size:9.8px;line-height:9.8px;top:368.10px;color:#000;font-weight:bold;left:99.70px;transform:scaleX(0.9291);">NOMBRE MODALIDAD: ERRADICACION DEL TRABAJO INFANTIL "ETI" UNIDAD PUNTA ESPAÑOLA</span>
<div style="left:96px;top:395px;width:766px;height:1px;background:#000;"></div>
<div style="left:96px;top:425px;width:766px;height:1px;background:#000;"></div>
<div style="left:96px;top:457px;width:766px;height:1px;background:#000;"></div>
<div style="left:96px;top:486px;width:766px;height:1px;background:#000;"></div>
<div style="left:96px;top:516px;width:766px;height:1px;background:#000;"></div>
<div style="left:96px;top:547px;width:766px;height:1px;background:#000;"></div>
<div style="left:96px;top:576px;width:766px;height:1px;background:#000;"></div>
<div style="left:96px;top:605px;width:766px;height:1px;background:#000;"></div>
<div style="left:96px;top:635px;width:766px;height:1px;background:#000;"></div>
<div style="left:96px;top:666px;width:766px;height:1px;background:#000;"></div>
<div style="left:96px;top:395px;width:1px;height:283px;background:#000;"></div>
<div style="left:163px;top:395px;width:1px;height:283px;background:#000;"></div>
<div style="left:334px;top:395px;width:1px;height:283px;background:#000;"></div>
<div style="left:414px;top:395px;width:1px;height:283px;background:#000;"></div>
<div style="left:483px;top:395px;width:1px;height:283px;background:#000;"></div>
<div style="left:558px;top:395px;width:1px;height:283px;background:#000;"></div>
<div style="left:668px;top:395px;width:1px;height:283px;background:#000;"></div>
<div style="left:726px;top:395px;width:1px;height:283px;background:#000;"></div>
<div style="left:861px;top:395px;width:1px;height:283px;background:#000;"></div>
<span class="t" style="font-size:10.9px;line-height:10.9px;top:406.27px;color:#000;font-weight:bold;left:110.40px;transform:scaleX(0.9170);">FECHA</span>
<span class="t" style="font-size:10.9px;line-height:10.9px;top:406.27px;color:#000;font-weight:bold;left:178.60px;transform:scaleX(0.9689);">NOMBRES  Y APELLIDOS</span>
<span class="t" style="font-size:10.9px;line-height:10.9px;top:406.27px;color:#000;font-weight:bold;left:350.30px;transform:scaleX(0.9297);">CÉDULA</span>
<span class="t" style="font-size:10.9px;line-height:10.9px;top:406.27px;color:#000;font-weight:bold;left:427.10px;transform:scaleX(0.9446);">CARGO</span>
<span class="t" style="font-size:10.9px;line-height:10.9px;top:398.27px;color:#000;font-weight:bold;left:494.50px;transform:scaleX(0.9733);">HORA DE</span>
<span class="t" style="font-size:10.9px;line-height:10.9px;top:415.27px;color:#000;font-weight:bold;left:492.70px;transform:scaleX(0.9634);">ENTRADA</span>
<span class="t" style="font-size:10.9px;line-height:10.9px;top:406.27px;color:#000;font-weight:bold;left:592.40px;">FIRMA</span>
<span class="t" style="font-size:10.9px;line-height:10.9px;top:398.27px;color:#000;font-weight:bold;left:671.70px;transform:scaleX(0.9673);">HORA DE</span>
<span class="t" style="font-size:10.9px;line-height:10.9px;top:415.27px;color:#000;font-weight:bold;left:676.10px;transform:scaleX(0.9520);">SALIDA</span>
<span class="t" style="font-size:10.9px;line-height:10.9px;top:406.27px;color:#000;font-weight:bold;left:772.50px;transform:scaleX(0.9889);">FIRMA</span>
<span class="t" style="font-size:13px;line-height:13px;top:436.10px;color:#000;left:105.25px;transform:scaleX(0.8990);">1/3/2022</span>
<span class="t" style="font-size:10.8px;line-height:10.8px;top:436.66px;color:#000;left:172.40px;transform:scaleX(0.9528);">Psi. Beatriz Leticia Garcia Vera</span>
<span class="t" style="font-size:13px;line-height:13px;top:436.10px;color:#000;left:342.20px;transform:scaleX(0.8214);">0923529192</span>
<span class="t" style="font-size:10.6px;line-height:10.6px;top:436.83px;color:#000;left:421.60px;transform:scaleX(0.8268);">PSICOLOGA</span>
<span class="t" style="font-size:13px;line-height:13px;top:436.10px;color:#000;left:502.10px;transform:scaleX(0.8300);">08H00</span>
<span class="t" style="font-size:13px;line-height:13px;top:436.10px;color:#000;left:679.30px;transform:scaleX(0.8222);">17H00</span>
<span class="t" style="font-size:13px;line-height:13px;top:466.30px;color:#000;left:105.25px;transform:scaleX(0.8990);">2/3/2022</span>
<span class="t" style="font-size:10.8px;line-height:10.8px;top:466.86px;color:#000;left:172.40px;transform:scaleX(0.9528);">Psi. Beatriz Leticia Garcia Vera</span>
<span class="t" style="font-size:13px;line-height:13px;top:466.30px;color:#000;left:342.20px;transform:scaleX(0.8214);">0923529192</span>
<span class="t" style="font-size:10.6px;line-height:10.6px;top:467.03px;color:#000;left:421.60px;transform:scaleX(0.8268);">PSICOLOGA</span>
<span class="t" style="font-size:13px;line-height:13px;top:466.30px;color:#000;left:502.10px;transform:scaleX(0.8300);">08H00</span>
<span class="t" style="font-size:13px;line-height:13px;top:466.30px;color:#000;left:679.30px;transform:scaleX(0.8222);">17H00</span>
<span class="t" style="font-size:13px;line-height:13px;top:495.90px;color:#000;left:105.25px;transform:scaleX(0.8990);">3/3/2022</span>
<span class="t" style="font-size:10.8px;line-height:10.8px;top:496.46px;color:#000;left:172.40px;transform:scaleX(0.9528);">Psi. Beatriz Leticia Garcia Vera</span>
<span class="t" style="font-size:13px;line-height:13px;top:495.90px;color:#000;left:342.20px;transform:scaleX(0.8214);">0923529192</span>
<span class="t" style="font-size:10.6px;line-height:10.6px;top:496.63px;color:#000;left:421.60px;transform:scaleX(0.8268);">PSICOLOGA</span>
<span class="t" style="font-size:13px;line-height:13px;top:495.90px;color:#000;left:502.10px;transform:scaleX(0.8300);">08H00</span>
<span class="t" style="font-size:13px;line-height:13px;top:495.90px;color:#000;left:679.30px;transform:scaleX(0.8222);">17H00</span>
<span class="t" style="font-size:13px;line-height:13px;top:526.10px;color:#000;left:105.25px;transform:scaleX(0.8990);">4/3/2022</span>
<span class="t" style="font-size:10.8px;line-height:10.8px;top:526.66px;color:#000;left:172.40px;transform:scaleX(0.9528);">Psi. Beatriz Leticia Garcia Vera</span>
<span class="t" style="font-size:13px;line-height:13px;top:526.10px;color:#000;left:342.20px;transform:scaleX(0.8214);">0923529192</span>
<span class="t" style="font-size:10.6px;line-height:10.6px;top:526.83px;color:#000;left:421.60px;transform:scaleX(0.8268);">PSICOLOGA</span>
<span class="t" style="font-size:13px;line-height:13px;top:526.10px;color:#000;left:502.10px;transform:scaleX(0.8300);">08H00</span>
<span class="t" style="font-size:13px;line-height:13px;top:526.10px;color:#000;left:679.30px;transform:scaleX(0.8222);">17H00</span>
<span class="t" style="font-size:13px;line-height:13px;top:556.10px;color:#000;left:105.25px;transform:scaleX(0.8990);">7/3/2022</span>
<span class="t" style="font-size:10.8px;line-height:10.8px;top:556.66px;color:#000;left:172.40px;transform:scaleX(0.9528);">Psi. Beatriz Leticia Garcia Vera</span>
<span class="t" style="font-size:13px;line-height:13px;top:556.10px;color:#000;left:342.20px;transform:scaleX(0.8214);">0923529192</span>
<span class="t" style="font-size:10.6px;line-height:10.6px;top:556.83px;color:#000;left:421.60px;transform:scaleX(0.8268);">PSICOLOGA</span>
<span class="t" style="font-size:13px;line-height:13px;top:556.10px;color:#000;left:502.10px;transform:scaleX(0.8300);">08H00</span>
<span class="t" style="font-size:13px;line-height:13px;top:556.10px;color:#000;left:679.30px;transform:scaleX(0.8222);">17H00</span>
<span class="t" style="font-size:13px;line-height:13px;top:585.20px;color:#000;left:105.25px;transform:scaleX(0.8990);">8/3/2022</span>
<span class="t" style="font-size:10.8px;line-height:10.8px;top:585.76px;color:#000;left:172.40px;transform:scaleX(0.9528);">Psi. Beatriz Leticia Garcia Vera</span>
<span class="t" style="font-size:13px;line-height:13px;top:585.20px;color:#000;left:342.20px;transform:scaleX(0.8214);">0923529192</span>
<span class="t" style="font-size:10.6px;line-height:10.6px;top:585.93px;color:#000;left:421.60px;transform:scaleX(0.8268);">PSICOLOGA</span>
<span class="t" style="font-size:13px;line-height:13px;top:585.20px;color:#000;left:502.10px;transform:scaleX(0.8300);">08H00</span>
<span class="t" style="font-size:13px;line-height:13px;top:585.20px;color:#000;left:679.30px;transform:scaleX(0.8222);">17H00</span>
<span class="t" style="font-size:13px;line-height:13px;top:614.40px;color:#000;left:105.25px;transform:scaleX(0.8990);">9/3/2022</span>
<span class="t" style="font-size:10.8px;line-height:10.8px;top:614.96px;color:#000;left:172.40px;transform:scaleX(0.9528);">Psi. Beatriz Leticia Garcia Vera</span>
<span class="t" style="font-size:13px;line-height:13px;top:614.40px;color:#000;left:342.20px;transform:scaleX(0.8214);">0923529192</span>
<span class="t" style="font-size:10.6px;line-height:10.6px;top:615.13px;color:#000;left:421.60px;transform:scaleX(0.8268);">PSICOLOGA</span>
<span class="t" style="font-size:13px;line-height:13px;top:614.40px;color:#000;left:502.10px;transform:scaleX(0.8300);">08H00</span>
<span class="t" style="font-size:13px;line-height:13px;top:614.40px;color:#000;left:679.30px;transform:scaleX(0.8222);">17H00</span>
<span class="t" style="font-size:13px;line-height:13px;top:644.20px;color:#000;left:102.50px;transform:scaleX(0.8817);">10/3/2022</span>
<span class="t" style="font-size:10.8px;line-height:10.8px;top:644.76px;color:#000;left:172.40px;transform:scaleX(0.9528);">Psi. Beatriz Leticia Garcia Vera</span>
<span class="t" style="font-size:13px;line-height:13px;top:644.20px;color:#000;left:342.20px;transform:scaleX(0.8214);">0923529192</span>
<span class="t" style="font-size:10.6px;line-height:10.6px;top:644.93px;color:#000;left:421.60px;transform:scaleX(0.8268);">PSICOLOGA</span>
<span class="t" style="font-size:13px;line-height:13px;top:644.20px;color:#000;left:502.10px;transform:scaleX(0.8300);">08H00</span>
<span class="t" style="font-size:13px;line-height:13px;top:644.20px;color:#000;left:679.30px;transform:scaleX(0.8222);">17H00</span>
<span class="t" style="font-size:13px;line-height:13px;top:674.00px;color:#000;left:102.50px;transform:scaleX(0.8967);">11/3/2022</span>
<span class="t" style="font-size:10.8px;line-height:10.8px;top:674.56px;color:#000;left:172.40px;transform:scaleX(0.9528);">Psi. Beatriz Leticia Garcia Vera</span>
<span class="t" style="font-size:13px;line-height:13px;top:674.00px;color:#000;left:342.20px;transform:scaleX(0.8214);">0923529192</span>
<span class="t" style="font-size:10.6px;line-height:10.6px;top:674.73px;color:#000;left:421.60px;transform:scaleX(0.8268);">PSICOLOGA</span>
<span class="t" style="font-size:13px;line-height:13px;top:674.00px;color:#000;left:502.10px;transform:scaleX(0.8300);">08H00</span>
<span class="t" style="font-size:13px;line-height:13px;top:674.00px;color:#000;left:679.30px;transform:scaleX(0.8222);">17H00</span>
<div style="left:0px;top:678px;width:1366px;height:28px;background:#e6e6e6;"></div>
<div style="left:0px;top:678px;width:1345px;height:1px;background:#ababab;"></div>
<div style="left:0px;top:706px;width:1366px;height:1px;background:#cacaca;"></div>
<svg style="left:26.5px;top:686.5px;" width="5" height="9" viewBox="0 0 5 9"><path d="M4.600 0.300v7.400l-4.300-3.700z" fill="#217346"/></svg>
<svg style="left:55.2px;top:688px;" width="5" height="7" viewBox="0 0 5 7"><path d="M0.200 0v7l4.400-3.500z" fill="#c3c3c3"/></svg>
<div style="left:81px;top:694px;width:2.3px;height:2.3px;background:#217346;"></div>
<div style="left:85px;top:694px;width:2.3px;height:2.3px;background:#217346;"></div>
<div style="left:89px;top:694px;width:2.3px;height:2.3px;background:#217346;"></div>
<div style="left:497px;top:678px;width:91px;height:23px;background:#fff;"></div>
<div style="left:497px;top:678px;width:1px;height:23px;background:#ababab;"></div>
<div style="left:588px;top:678px;width:1px;height:23px;background:#ababab;"></div>
<div style="left:497px;top:701px;width:92px;height:2px;background:#217346;"></div>
<div style="left:100px;top:682px;width:1px;height:20px;background:#ababab;"></div>
<div style="left:191px;top:682px;width:1px;height:20px;background:#ababab;"></div>
<div style="left:282px;top:682px;width:1px;height:20px;background:#ababab;"></div>
<div style="left:406px;top:682px;width:1px;height:20px;background:#ababab;"></div>
<div style="left:668px;top:682px;width:1px;height:20px;background:#ababab;"></div>
<div style="left:748px;top:682px;width:1px;height:20px;background:#ababab;"></div>
<div style="left:839px;top:682px;width:1px;height:20px;background:#ababab;"></div>
<div style="left:930px;top:682px;width:1px;height:20px;background:#ababab;"></div>
<div style="left:1009px;top:682px;width:1px;height:20px;background:#ababab;"></div>
<span class="t" style="font-size:12.2px;line-height:12.2px;top:685.67px;color:#444;left:113.20px;transform:scaleX(0.9921);">ANEXO 1.1</span>
<span class="t" style="font-size:12.2px;line-height:12.2px;top:685.67px;color:#444;left:204.30px;transform:scaleX(1.0063);">ANEXO 1.2</span>
<span class="t" style="font-size:12.2px;line-height:12.2px;top:685.67px;color:#444;left:296.00px;">ANEXO 2.4 CIBV</span>
<span class="t" style="font-size:12.2px;line-height:12.2px;top:685.67px;color:#444;left:419.20px;transform:scaleX(1.0095);">ANEXO 2.5</span>
<span class="t" style="font-size:12.2px;line-height:12.2px;top:685.67px;color:#444;left:601.20px;transform:scaleX(1.0181);">ANEXO 4</span>
<span class="t" style="font-size:12.2px;line-height:12.2px;top:685.67px;color:#444;left:681.20px;transform:scaleX(1.0124);">ANEXO 5</span>
<span class="t" style="font-size:12.2px;line-height:12.2px;top:685.67px;color:#444;left:761.20px;">ANEXO 6.1</span>
<span class="t" style="font-size:12.2px;line-height:12.2px;top:685.67px;color:#444;left:852.20px;transform:scaleX(1.0063);">ANEXO 6.2</span>
<span class="t" style="font-size:12.2px;line-height:12.2px;top:685.67px;color:#444;left:943.20px;transform:scaleX(1.0086);">ANEXO 7</span>
<span class="t" style="font-size:12.2px;line-height:12.2px;top:685.67px;color:#217346;font-weight:bold;left:509.30px;transform:scaleX(1.0476);">ANEXO 3.4</span>
<svg style="left:1043px;top:684px;" width="16" height="16" viewBox="0 0 16 16"><circle cx="8" cy="8" r="7.300" fill="none" stroke="#8a8a8a" stroke-width="1"/><path d="M8 4.200v7.600M4.200 8h7.600" stroke="#777" stroke-width="1.300"/></svg>
<div style="left:1223px;top:687.5px;width:2px;height:2px;background:#b5b5b5;"></div>
<div style="left:1223px;top:691.5px;width:2px;height:2px;background:#b5b5b5;"></div>
<div style="left:1223px;top:695.5px;width:2px;height:2px;background:#b5b5b5;"></div>
<div style="left:1240px;top:685px;width:105px;height:15px;background:#dadada;"></div>
<div style="left:1240px;top:685px;width:13px;height:13px;background:#fff;border:1px solid #777;"></div>
<svg style="left:1245px;top:689px;" width="4" height="7" viewBox="0 0 4 7"><path d="M4 0v7l-4-3.500z" fill="#777"/></svg>
<div style="left:1254px;top:685px;width:64px;height:13px;background:#fff;border:1px solid #777;"></div>
<div style="left:1330px;top:685px;width:13px;height:13px;background:#fff;border:1px solid #777;"></div>
<svg style="left:1336px;top:689px;" width="4" height="7" viewBox="0 0 4 7"><path d="M0 0v7l4-3.500z" fill="#777"/></svg>
<div style="left:0px;top:707px;width:1366px;height:21px;background:#f3f3f3;"></div>
<span class="t" style="font-size:12px;line-height:12px;top:712.34px;color:#444;left:7.50px;transform:scaleX(0.9030);">Listo</span>
<svg style="left:49px;top:710px;" width="17" height="15" viewBox="0 0 17 15"><path d="M6.500 1.200a5.600 5.600 0 1 0 5.200 7.800" fill="none" stroke="#444" stroke-width="1.300" stroke-dasharray="2.400 1.200"/><path d="M6.700 0.300v5.400M4.700 4.200l2 2l2-2" fill="none" stroke="#333" stroke-width="1.200"/>
<text x="9.600" y="14.300" font-size="12.500" font-weight="bold" fill="#333" font-family="Liberation Sans, sans-serif">?</text></svg>
<span class="t" style="font-size:12px;line-height:12px;top:712.34px;color:#444;left:68.00px;transform:scaleX(0.9724);">Accesibilidad: No disponible</span>
<svg style="left:1079px;top:711px;" width="14" height="13" viewBox="0 0 14 13"><path d="M0.500 0.500h12.500v11.500h-12.500zM0.500 4.500h12.500M0.500 8.500h12.500M4.500 0.500v11.500M8.500 0.500v11.500" fill="none" stroke="#777" stroke-width="1"/></svg>
<div style="left:1106px;top:707px;width:40px;height:21px;background:#c6c6c6;"></div>
<svg style="left:1119px;top:711px;" width="15" height="13" viewBox="0 0 15 13"><path d="M0.500 0.500h14v12h-14z" fill="none" stroke="#666" stroke-width="1"/><path d="M3.500 2.500h8v8h-8z" fill="none" stroke="#666" stroke-width="1"/><path d="M5.500 5h4M5.500 6.800h4M5.500 8.600h4" stroke="#666" stroke-width="0.800"/></svg>
<svg style="left:1159px;top:710px;" width="14" height="13" viewBox="0 0 14 13"><path d="M0.500 0.500h13v12h-13zM0.500 6.500h8v-6" fill="none" stroke="#777" stroke-width="1"/></svg>
<div style="left:1192px;top:716.5px;width:8px;height:1.3px;background:#555;"></div>
<div style="left:1205px;top:717px;width:100px;height:1px;background:#8a8a8a;"></div>
<div style="left:1253px;top:711px;width:5px;height:12px;background:#666;"></div>
<div style="left:1310px;top:716.5px;width:8px;height:1.3px;background:#555;"></div>
<div style="left:1313.4px;top:713px;width:1.3px;height:8px;background:#555;"></div>
<span class="t" style="font-size:12px;line-height:12px;top:712.34px;color:#444;left:1331.60px;transform:scaleX(0.8533);">100%</span>
<div style="left:0px;top:728px;width:1366px;height:40px;background:#19292e;"></div>
<div style="left:48px;top:728px;width:344px;height:40px;background:#f3f3f3;"></div>
<div style="left:48px;top:728px;width:344px;height:1px;background:#bdbdbd;"></div>
<svg style="left:15.5px;top:739.5px;" width="17" height="17" viewBox="0 0 17 17"><path d="M0 2.300l7-1v6.900h-7zM7.900 1.200l8.900-1.200v8.200h-8.900zM0 9.100h7v6.900l-7-1zM7.900 9.100h8.900v8.200l-8.900-1.300z" fill="#ffffff"/></svg>
<svg style="left:59px;top:739px;" width="18" height="18" viewBox="0 0 18 18"><circle cx="11.300" cy="6.600" r="5.300" fill="none" stroke="#1e1e1e" stroke-width="1.300"/><path d="M7.600 10.400L1.200 16.800" stroke="#1e1e1e" stroke-width="1.300"/></svg>
<span class="t" style="font-size:15px;line-height:15px;top:741.40px;color:#2b2b2b;left:88.60px;transform:scaleX(0.9612);">Escribe aquí para buscar</span>
<svg style="left:407px;top:739px;" width="18" height="18" viewBox="0 0 18 18"><circle cx="9" cy="9" r="7.100" fill="none" stroke="#ffffff" stroke-width="2"/></svg>
<svg style="left:455px;top:740px;" width="17" height="16" viewBox="0 0 17 16"><path d="M1 0.500h11M1 15.500h11" stroke="#ffffff" stroke-width="1"/><rect x="2.500" y="4" width="9" height="8" fill="none" stroke="#ffffff" stroke-width="1.300"/><path d="M14.500 0v5M14.500 10v6" stroke="#ffffff" stroke-width="1.200"/><rect x="13.500" y="6" width="2.300" height="2.600" fill="#ffffff"/></svg>
<svg style="left:504px;top:738px;" width="22" height="19" viewBox="0 0 22 19"><path d="M0 2.500q0-1 1-1h6.500l2 2h11.500q1 0 1 1v13.500q0 1-1 1h-20q-1 0-1-1z" fill="#f9c843"/><path d="M0 6.500h22v11.500q0 1-1 1h-20q-1 0-1-1z" fill="#fcdc6e"/>
<path d="M5.500 19v-6.500q0-1 1-1h9q1 0 1 1v6.500h-3v-4.500h-5v4.500z" fill="#3f8ad8"/></svg>
<div style="left:495px;top:766px;width:40px;height:2px;background:#76b9ed;"></div>
<svg style="left:552px;top:736px;" width="24" height="24" viewBox="0 0 24 24"><defs><linearGradient id="eg1" x1="0" y1="0" x2="1" y2="0"><stop offset="0" stop-color="#2ea3e6"/><stop offset="0.550" stop-color="#37c6c0"/><stop offset="1" stop-color="#7fd54a"/></linearGradient></defs>
<circle cx="12" cy="12" r="12" fill="#1269c7"/><path d="M0.300 10C1.500 4 6 0 12 0c6.500 0 12 4.800 12 10.200c0 3.600-2.800 5.800-6 5.800c-2.600 0-4.400-1.200-4.400-2.600c0-1 1-1.400 1-3c0-2.400-2.400-4.600-5.800-4.600c-3.400 0-6.800 1.800-8.500 4.200z" fill="url(#eg1)"/>
<path d="M9 8.500c-3.200 1.200-4.800 4.400-4 8c0.900 4 4.600 7.300 9.400 7.300c2.400 0 4.600-0.800 6.200-2c-1.400 0.600-3 0.700-4.600 0.300c-3.600-1-6-4.200-6-7.600c0-2.500 1.300-4.300 3-5.300c-1.300-0.900-2.700-1.100-4-0.700z" fill="#0c4ea2"/><path d="M13.500 13.600c0 1.400 1.800 2.600 4.400 2.600c1.400 0 2.700-0.400 3.700-1.100c-0.700 2.600-3.300 4.300-6.100 4.300c-3 0-4.600-2-4.600-4.600c0-1.600 0.700-2.900 1.700-3.800c0.700 0.700 0.900 1.700 0.900 2.600z" fill="#19292e"/></svg>
<div style="left:544px;top:766px;width:40px;height:2px;background:#76b9ed;"></div>
<svg style="left:601px;top:736px;" width="23" height="24" viewBox="0 0 23 24"><path d="M7 6V3.800q0-2.300 2.300-2.300h4.400q2.300 0 2.300 2.300V6" fill="none" stroke="#3aa0e8" stroke-width="1.800"/><path d="M0.500 6h22v15q0 2.500-2.500 2.500h-17q-2.500 0-2.500-2.500z" fill="#f2f2f2"/>
<rect x="6.500" y="9.500" width="4.300" height="4.300" fill="#f25022"/><rect x="12" y="9.500" width="4.300" height="4.300" fill="#7fba00"/><rect x="6.500" y="15" width="4.300" height="4.300" fill="#00a4ef"/><rect x="12" y="15" width="4.300" height="4.300" fill="#ffb900"/></svg>
<svg style="left:650px;top:736px;" width="25" height="23" viewBox="0 0 25 23"><path d="M0 7.500L12.500 0L25 7.500V22.500H0z" fill="#1e7fd6"/><path d="M0 7.500h25L12.500 17z" fill="#e9f3fb"/><path d="M0 22.500v-15l12.500 9.500l12.500-9.500v15z" fill="#2f9be8"/><path d="M0 22.500L12.500 14.800L25 22.500z" fill="#1b74c9"/></svg>
<svg style="left:700px;top:736px;" width="26" height="27" viewBox="0 0 26 27"><circle cx="11.200" cy="11.400" r="11.200" fill="#dd4b3e"/><path d="M11.200 11.400L1.500 5.800A11.200 11.200 0 0 0 9 22.400l4.500-7z" fill="#1ea362"/><path d="M11.200 11.400l2.300 4L9 22.400A11.200 11.200 0 0 0 21 6h-9.800z" fill="#fdd04c"/>
<circle cx="11.200" cy="11.400" r="5.200" fill="#fff"/><circle cx="11.200" cy="11.400" r="4.100" fill="#4c8bf5"/>
<circle cx="18" cy="19" r="7" fill="#3a2a2e"/><circle cx="18" cy="18.200" r="3.200" fill="#e8b9a6"/><path d="M12.800 23.600c1-3.400 9.400-3.400 10.400 0a7 7 0 0 1-10.400 0z" fill="#d9457c"/><path d="M14.300 18.500c-0.600-3 1.200-5.300 3.700-5.300s4.300 2.300 3.700 5.300c-0.400-2.200-1.800-3.200-3.700-3.200s-3.300 1-3.700 3.200z" fill="#2a1c1e"/></svg>
<div style="left:691px;top:766px;width:40px;height:2px;background:#76b9ed;"></div>
<svg style="left:748.5px;top:736.5px;" width="23" height="23" viewBox="0 0 23 23"><rect width="23" height="23" rx="7.500" fill="#4a8cff"/><rect x="4.500" y="7.500" width="10" height="8" rx="2" fill="#fff"/><path d="M15.300 10.300l3.700-2.300v7l-3.700-2.300z" fill="#fff"/></svg>
<svg style="left:796.5px;top:737.5px;" width="25" height="22" viewBox="0 0 25 22"><rect x="6" y="0" width="19" height="5.500" fill="#41a5ee"/><rect x="6" y="5.500" width="19" height="5.500" fill="#2b7cd3"/><rect x="6" y="11" width="19" height="5.500" fill="#185abd"/><rect x="6" y="16.500" width="19" height="5.500" fill="#103f91"/>
<rect x="0" y="4.500" width="13" height="13" rx="1" fill="#185abd"/><text x="6.500" y="15" text-anchor="middle" font-size="10.500" font-weight="bold" fill="#fff" font-family="Liberation Sans, sans-serif">W</text></svg>
<div style="left:789px;top:766px;width:32px;height:2px;background:#76b9ed;"></div>
<div style="left:821px;top:766px;width:8px;height:2px;background:#4d7596;"></div>
<div style="left:834px;top:728px;width:48px;height:40px;background:#4a585d;"></div>
<svg style="left:846px;top:737.5px;" width="25" height="22" viewBox="0 0 25 22"><rect x="6" y="0" width="9.500" height="5.500" fill="#21a366"/><rect x="15.500" y="0" width="9.500" height="5.500" fill="#33c481"/><rect x="6" y="5.500" width="9.500" height="5.500" fill="#107c41"/><rect x="15.500" y="5.500" width="9.500" height="5.500" fill="#21a366"/><rect x="6" y="11" width="9.500" height="5.500" fill="#185c37"/><rect x="15.500" y="11" width="9.500" height="5.500" fill="#107c41"/><rect x="6" y="16.500" width="19" height="5.500" fill="#185c37"/>
<rect x="0" y="4.500" width="13" height="13" rx="1" fill="#107c41"/><text x="6.500" y="15" text-anchor="middle" font-size="10.500" font-weight="bold" fill="#fff" font-family="Liberation Sans, sans-serif">X</text></svg>
<div style="left:834px;top:766px;width:48px;height:2px;background:#76b9ed;"></div>
<svg style="left:894.5px;top:736.5px;" width="25" height="23" viewBox="0 0 25 23"><circle cx="14" cy="11.500" r="11" fill="#ed6c47"/><path d="M14 0.500a11 11 0 0 1 11 11h-11z" fill="#ff8f6b"/><path d="M3 11.500h22a11 11 0 0 1-22 0z" fill="#d35230"/>
<rect x="0" y="5" width="13" height="13" rx="1" fill="#c43e1c"/><text x="6.500" y="15.500" text-anchor="middle" font-size="10.500" font-weight="bold" fill="#fff" font-family="Liberation Sans, sans-serif">P</text></svg>
<svg style="left:973.5px;top:740.5px;" width="21" height="16" viewBox="0 0 21 16"><defs><linearGradient id="wc" x1="0" y1="0" x2="1" y2="1"><stop offset="0" stop-color="#eef7fe"/><stop offset="0.5" stop-color="#c6e3fa"/><stop offset="1" stop-color="#e3f1fc"/></linearGradient></defs><path d="M5 11.500a4.200 4.200 0 0 1-0.300-8.300a6 6 0 0 1 11.300 0.800a3.800 3.800 0 0 1 0.500 7.500z" fill="url(#wc)"/><path d="M10.500 8l2 3.600a2.200 2.200 0 1 1-4 0z" fill="#4fa3f0"/></svg>
<span class="t" style="font-size:15px;line-height:15px;top:741.80px;color:#ffffff;left:1004.50px;transform:scaleX(0.8503);">30°C</span>
<svg style="left:1051px;top:743px;" width="13" height="8" viewBox="0 0 13 8"><path d="M0.700 7.300l5.800-6l5.800 6" fill="none" stroke="#ffffff" stroke-width="1.400"/></svg>
<svg style="left:1075px;top:740px;" width="12" height="16" viewBox="0 0 12 16"><rect width="12" height="16" rx="6" fill="#1e90ff"/><path d="M3.300 5.200l5.200 5.200l-2.700 2.600v-10l2.700 2.600l-5.200 5.200" fill="none" stroke="#fff" stroke-width="1.100"/></svg>
<svg style="left:1097px;top:743px;" width="17" height="11" viewBox="0 0 17 11"><path d="M4.200 10.500a3.700 3.700 0 0 1-0.500-7.300a5 5 0 0 1 9.300 1.200a3.200 3.200 0 0 1 0.300 6.100z" fill="#e8e8e8"/><path d="M2 8.500c4 0 8-1 12-3.500a3.200 3.200 0 0 1-0.700 5.500h-9.100a3.700 3.700 0 0 1-2.200-2z" fill="#c4c4c4"/></svg>
<svg style="left:1123.5px;top:740px;" width="12" height="17" viewBox="0 0 12 17"><path d="M2.500 2.500q3.500-2.500 7 0M2.500 14.500q3.500 2.500 7 0" fill="none" stroke="#ffffff" stroke-width="1"/><rect x="0.600" y="5" width="7.400" height="7" rx="1.500" fill="none" stroke="#ffffff" stroke-width="1.200"/><path d="M8.500 7.500l2.800-1.500v5l-2.800-1.500z" fill="none" stroke="#ffffff" stroke-width="1"/></svg>
<svg style="left:1148px;top:742px;" width="14" height="13" viewBox="0 0 14 13"><circle cx="11.500" cy="11" r="1.400" fill="#ffffff"/><path d="M6.500 12.500a5 5 0 0 1 5-5M3.300 12.500a8.200 8.200 0 0 1 8.200-8.200M0.500 12.500a11 11 0 0 1 11-11" fill="none" stroke="#ffffff" stroke-width="1.200"/></svg>
<svg style="left:1170px;top:742px;" width="16" height="14" viewBox="0 0 16 14"><rect x="0.600" y="2.600" width="12.500" height="7" fill="none" stroke="#ffffff" stroke-width="1.200"/><rect x="13.500" y="4.500" width="1.500" height="3.200" fill="#ffffff"/><rect x="2" y="4" width="6" height="4.200" fill="#ffffff"/><circle cx="10.800" cy="9.600" r="4" fill="#1aa32a"/><path d="M10.800 7.200c1.300 1 1.600 2.400 0 4.400c-1.600-2-1.300-3.400 0-4.400z" fill="#fff"/></svg>
<svg style="left:1192.5px;top:741px;" width="17" height="14" viewBox="0 0 17 14"><path d="M0.600 4.800h2.800l3.800-3.600v11.600l-3.800-3.600h-2.800z" fill="none" stroke="#ffffff" stroke-width="1.100"/><path d="M9.300 4.600a3.400 3.400 0 0 1 0 4.800M11.400 2.800a6 6 0 0 1 0 8.400M13.600 1a8.600 8.600 0 0 1 0 12" fill="none" stroke="#ffffff" stroke-width="1.100"/></svg>
<span class="t" style="font-size:12px;line-height:12px;top:742.54px;color:#ffffff;left:1221.40px;transform:scaleX(0.7578);">ESP</span>
<span class="t" style="font-size:12.3px;line-height:12.3px;top:732.69px;color:#ffffff;left:1270.00px;transform:scaleX(0.8773);">9:50</span>
<span class="t" style="font-size:12.3px;line-height:12.3px;top:750.59px;color:#ffffff;left:1255.50px;transform:scaleX(0.9357);">12/4/2022</span>
<svg style="left:1324.5px;top:740px;" width="25" height="25" viewBox="0 0 25 25"><path d="M0.500 0.500h15.500v12h-11l-4.500 4z" fill="#ffffff"/><path d="M3 3.800h10.500M3 6.500h10.500M3 9.200h7" stroke="#19292e" stroke-width="1"/><circle cx="16" cy="15.500" r="8" fill="#2a2a2a" stroke="#5a5a5a" stroke-width="1.200"/><text x="16" y="20" text-anchor="middle" font-size="12" font-weight="bold" fill="#fff" font-family="Liberation Sans, sans-serif">1</text></svg>
</div></body></html>
